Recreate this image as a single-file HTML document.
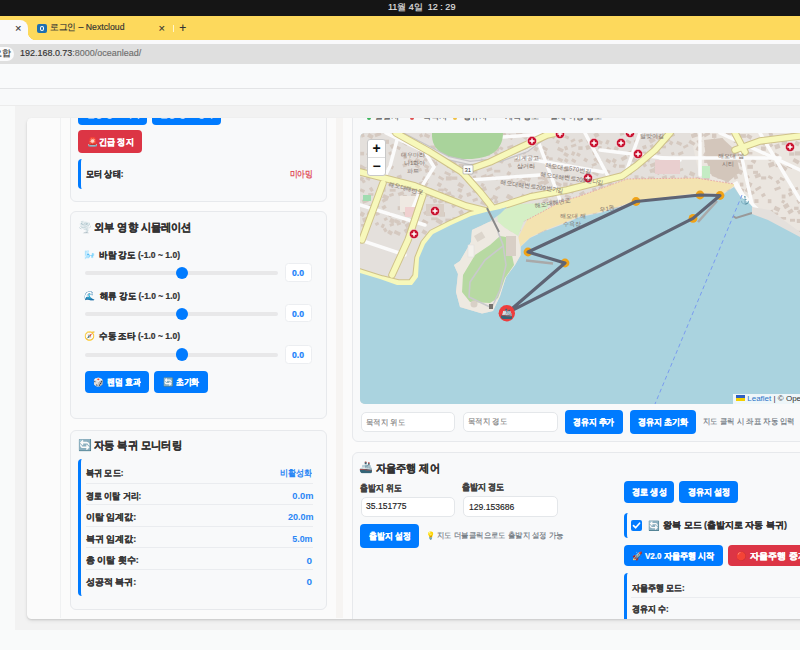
<!DOCTYPE html>
<html><head><meta charset="utf-8">
<style>
*{box-sizing:border-box;margin:0;padding:0}
html,body{width:800px;height:650px;overflow:hidden;background:#f9fafa;font-family:"Liberation Sans",sans-serif;color:#333;position:relative}
.a{position:absolute}
.t{position:absolute;white-space:nowrap;line-height:1}
.b{-webkit-text-stroke:0.22px currentColor}
.n{-webkit-text-stroke:0.15px currentColor}
</style></head><body>
<div class="a" style="left:0px;top:0px;width:800.00px;height:15.50px;background:#151515"></div>
<div class="t n" style="left:388.00px;top:2.50px;font-size:9px;font-weight:normal;color:#e4e4e4;transform:scaleX(1.0002);transform-origin:0 50%;-webkit-text-stroke:0.15px #e4e4e4">11월 4일&nbsp; 12 : 29</div>
<div class="a" style="left:0px;top:15.5px;width:800.00px;height:24.50px;background:#fdd95c"></div>
<div class="a" style="left:0px;top:20px;width:28.00px;height:20.00px;background:#f9f9fb;border-radius:0 8px 0 0"></div>
<div class="a" style="left:28px;top:32px;width:8.00px;height:8.00px;background:radial-gradient(circle at 100% 0, transparent 8px, #f9f9fb 8.5px)"></div>
<div class="t n" style="left:14.90px;top:22.50px;font-size:11px;font-weight:normal;color:#333;">×</div>
<div class="a" style="left:37px;top:23.75px;width:9.50px;height:9.25px;background:#1d6fb0;border-radius:2px"></div>
<div class="a" style="left:39.5px;top:26.2px;width:4.50px;height:4.40px;border:1.3px solid #fff;border-radius:50%"></div>
<div class="t n" style="left:49.85px;top:23.00px;font-size:9px;font-weight:normal;color:#333;transform:scaleX(0.9672);transform-origin:0 50%;">로그인 – Nextcloud</div>
<div class="t n" style="left:158.40px;top:22.50px;font-size:11px;font-weight:normal;color:#333;">×</div>
<div class="a" style="left:173px;top:24.5px;width:1.00px;height:7.50px;background:#fff6cc"></div>
<div class="t n" style="left:179.30px;top:22.00px;font-size:12px;font-weight:normal;color:#333;">+</div>
<div class="a" style="left:0px;top:40px;width:800.00px;height:24.00px;background:#f9f9fb"></div>
<div class="a" style="left:0px;top:43.75px;width:800.00px;height:20.00px;background:#dfdfdf"></div>
<div class="a" style="left:-12px;top:46.6px;width:26.00px;height:14.20px;background:#fbfbfc;border-radius:7px"></div>
<div class="t n" style="left:-7.35px;top:49.45px;font-size:8.5px;font-weight:normal;color:#333;">요합</div>
<div class="t n" style="left:19.60px;top:49.30px;font-size:9.0px;font-weight:normal;color:#333;transform:scaleX(0.9959);transform-origin:0 50%;">192.168.0.73<span style="color:#6f6f6f">:8000/oceanlead/</span></div>
<div class="a" style="left:0px;top:64px;width:800.00px;height:24.00px;background:#f9fafb"></div>
<div class="a" style="left:0px;top:88px;width:800.00px;height:1.00px;background:#e3e4e6"></div>
<div class="a" style="left:0px;top:89px;width:800.00px;height:16.00px;background:#f8f9fa"></div>
<div class="a" style="left:0px;top:105px;width:800.00px;height:1.00px;background:#ececec"></div>
<div class="a" style="left:15px;top:106px;width:785.00px;height:524.00px;background:#f2f2f2"></div>
<div class="a" style="left:26.5px;top:118px;width:803.50px;height:500.50px;background:#fbfbfb;border-radius:4.5px;box-shadow:0 1px 2px rgba(0,0,0,.12), 0 2px 4px rgba(0,0,0,.07)"></div>
<div class="a" style="left:60px;top:118px;width:1.00px;height:500.00px;background:#f0f1f2"></div>
<div class="a" style="left:336px;top:118px;width:7.00px;height:500.00px;background:#f6f4f2"></div>
<div class="a" style="left:61px;top:118px;width:275px;height:500.5px;overflow:hidden"><div class="a" style="left:-61px;top:-118px;width:800px;height:650px">
<div class="a" style="left:70px;top:40px;width:256.50px;height:161.70px;background:#f8f9fa;border:1px solid #e7e9ec;border-radius:6px"></div>
<div class="a" style="left:78px;top:100px;width:69.00px;height:24.60px;background:#007bff;border-radius:4px"></div>
<div class="a" style="left:152.1px;top:100px;width:69.20px;height:24.60px;background:#007bff;border-radius:4px"></div>
<div class="t b" style="left:87.17px;top:110.15px;font-size:8.3px;font-weight:bold;color:#fff;">운항 경로 시작</div>
<div class="t b" style="left:160.17px;top:110.15px;font-size:8.3px;font-weight:bold;color:#fff;">운항 경로 정지</div>
<div class="a" style="left:78px;top:130.4px;width:64.00px;height:22.20px;background:#dc3545;border-radius:4px"></div>
<div class="t" style="left:86.73px;top:137.50px;font-size:9px">🚨</div>
<div class="t b" style="left:99.10px;top:138.00px;font-size:9px;font-weight:bold;color:#fff;transform:scaleX(0.8990);transform-origin:0 50%;">긴급 정지</div>
<div class="a" style="left:78px;top:159px;width:240.00px;height:29.50px;border-left:3px solid #007bff;border-radius:4px 0 0 4px"></div>
<div class="t b" style="left:86.10px;top:169.50px;font-size:9px;font-weight:bold;color:#333;transform:scaleX(0.9024);transform-origin:0 50%;">모터 상태:</div>
<div class="t b" style="right:487.50px;top:169.50px;font-size:9px;font-weight:bold;color:#e0505c;transform:scaleX(0.8661);transform-origin:100% 50%;-webkit-text-stroke:0">미아밍</div>
<div class="a" style="left:70px;top:211.3px;width:256.50px;height:207.70px;background:#f8f9fa;border:1px solid #e7e9ec;border-radius:6px"></div>
<div class="t" style="left:77.66px;top:222.40px;font-size:11.2px">🌪️</div>
<div class="t b" style="left:94.30px;top:221.75px;font-size:11px;font-weight:bold;color:#333;transform:scaleX(0.9296);transform-origin:0 50%;">외부 영향 시뮬레이션</div>
<div class="t" style="left:84.33px;top:250.50px;font-size:9px">🌬️</div>
<div class="t b" style="left:98.50px;top:250.50px;font-size:9px;font-weight:bold;color:#333;transform:scaleX(0.9507);transform-origin:0 50%;">바람 강도 (-1.0 ~ 1.0)</div>
<div class="a" style="left:84.5px;top:270.59999999999997px;width:193.50px;height:4.20px;background:#e8e8e9;border-radius:3px"></div>
<div class="a" style="left:175.6px;top:266.5px;width:12.40px;height:12.40px;background:#007bff;border-radius:50%"></div>
<div class="a" style="left:284.5px;top:263.25px;width:27.25px;height:18.50px;background:#fff;border:1px solid #eceef1;border-radius:3.5px"></div>
<div class="t b" style="left:292.10px;top:268.80px;font-size:9px;font-weight:bold;color:#1a7ffb;transform:scaleX(0.9575);transform-origin:0 50%;">0.0</div>
<div class="t" style="left:84.33px;top:292.20px;font-size:9px">🌊</div>
<div class="t b" style="left:99.50px;top:292.40px;font-size:9px;font-weight:bold;color:#333;transform:scaleX(0.9396);transform-origin:0 50%;">해류 강도 (-1.0 ~ 1.0)</div>
<div class="a" style="left:84.5px;top:311.59999999999997px;width:193.50px;height:4.20px;background:#e8e8e9;border-radius:3px"></div>
<div class="a" style="left:175.6px;top:307.5px;width:12.40px;height:12.40px;background:#007bff;border-radius:50%"></div>
<div class="a" style="left:284.5px;top:304.1px;width:27.25px;height:18.40px;background:#fff;border:1px solid #eceef1;border-radius:3.5px"></div>
<div class="t b" style="left:292.10px;top:310.40px;font-size:9px;font-weight:bold;color:#1a7ffb;transform:scaleX(0.9575);transform-origin:0 50%;">0.0</div>
<div class="t" style="left:84.33px;top:332.00px;font-size:9px">🧭</div>
<div class="t b" style="left:98.50px;top:332.00px;font-size:9px;font-weight:bold;color:#333;transform:scaleX(0.9507);transform-origin:0 50%;">수동 조타 (-1.0 ~ 1.0)</div>
<div class="a" style="left:84.5px;top:352.5px;width:193.50px;height:4.20px;background:#e8e8e9;border-radius:3px"></div>
<div class="a" style="left:175.6px;top:348.40000000000003px;width:12.40px;height:12.40px;background:#007bff;border-radius:50%"></div>
<div class="a" style="left:284.5px;top:345.0px;width:27.25px;height:19.00px;background:#fff;border:1px solid #eceef1;border-radius:3.5px"></div>
<div class="t b" style="left:292.10px;top:350.80px;font-size:9px;font-weight:bold;color:#1a7ffb;transform:scaleX(0.9575);transform-origin:0 50%;">0.0</div>
<div class="a" style="left:85.2px;top:370.75px;width:64.05px;height:22.05px;background:#007bff;border-radius:4px"></div>
<div class="t" style="left:93.36px;top:377.75px;font-size:8.5px">🎲</div>
<div class="t b" style="left:106.85px;top:377.60px;font-size:9px;font-weight:bold;color:#fff;transform:scaleX(0.8688);transform-origin:0 50%;">랜덤 효과</div>
<div class="a" style="left:153.8px;top:370.75px;width:54.20px;height:22.05px;background:#007bff;border-radius:4px"></div>
<div class="t" style="left:163.36px;top:377.75px;font-size:8.5px">🔄</div>
<div class="t b" style="left:175.60px;top:377.60px;font-size:9px;font-weight:bold;color:#fff;transform:scaleX(0.8582);transform-origin:0 50%;">초기화</div>
<div class="a" style="left:70px;top:429.5px;width:256.50px;height:180.30px;background:#f8f9fa;border:1px solid #e7e9ec;border-radius:6px"></div>
<div class="t" style="left:77.66px;top:440.40px;font-size:11.2px">🔄</div>
<div class="t b" style="left:94.30px;top:440.30px;font-size:11px;font-weight:bold;color:#333;transform:scaleX(0.9356);transform-origin:0 50%;">자동 복귀 모니터링</div>
<div class="a" style="left:78px;top:458.5px;width:240.00px;height:137.50px;border-left:3px solid #007bff;border-radius:4px 0 0 4px"></div>
<div class="a" style="left:86px;top:482.5px;width:226.60px;height:1.00px;background:#eaecef"></div>
<div class="a" style="left:86px;top:504px;width:226.60px;height:1.00px;background:#eaecef"></div>
<div class="a" style="left:86px;top:526px;width:226.60px;height:1.00px;background:#eaecef"></div>
<div class="a" style="left:86px;top:547.2px;width:226.60px;height:1.00px;background:#eaecef"></div>
<div class="a" style="left:86px;top:568.8px;width:226.60px;height:1.00px;background:#eaecef"></div>
<div class="t b" style="left:85.70px;top:469.40px;font-size:9px;font-weight:bold;color:#3a3a3a;transform:scaleX(0.9024);transform-origin:0 50%;">복귀 모드:</div>
<div class="t b" style="right:487.80px;top:469.40px;font-size:9px;font-weight:bold;color:#2a86f5;transform:scaleX(0.8928);transform-origin:100% 50%;-webkit-text-stroke:0">비활성화</div>
<div class="t b" style="left:85.70px;top:491.80px;font-size:9px;font-weight:bold;color:#3a3a3a;transform:scaleX(0.8904);transform-origin:0 50%;">경로 이탈 거리:</div>
<div class="t b" style="right:486.80px;top:491.80px;font-size:9px;font-weight:bold;color:#2a86f5;transform:scaleX(1.0315);transform-origin:100% 50%;-webkit-text-stroke:0">0.0m</div>
<div class="t b" style="left:85.70px;top:513.00px;font-size:9px;font-weight:bold;color:#3a3a3a;">이탈 임계값:</div>
<div class="t b" style="right:486.80px;top:513.00px;font-size:9px;font-weight:bold;color:#2a86f5;transform:scaleX(1.0048);transform-origin:100% 50%;-webkit-text-stroke:0">20.0m</div>
<div class="t b" style="left:85.70px;top:534.50px;font-size:9px;font-weight:bold;color:#3a3a3a;">복귀 임계값:</div>
<div class="t b" style="right:487.80px;top:534.50px;font-size:9px;font-weight:bold;color:#2a86f5;transform:scaleX(0.9871);transform-origin:100% 50%;-webkit-text-stroke:0">5.0m</div>
<div class="t b" style="left:85.70px;top:555.70px;font-size:9px;font-weight:bold;color:#3a3a3a;">총 이탈 횟수:</div>
<div class="t b" style="right:487.80px;top:556.70px;font-size:9px;font-weight:bold;color:#2a86f5;transform:scaleX(1.1073);transform-origin:100% 50%;-webkit-text-stroke:0">0</div>
<div class="t b" style="left:85.70px;top:577.90px;font-size:9px;font-weight:bold;color:#3a3a3a;">성공적 복귀:</div>
<div class="t b" style="right:487.80px;top:577.90px;font-size:9px;font-weight:bold;color:#2a86f5;transform:scaleX(1.1073);transform-origin:100% 50%;-webkit-text-stroke:0">0</div>
</div></div>
<div class="a" style="left:343px;top:118px;width:457px;height:500.5px;overflow:hidden"><div class="a" style="left:-343px;top:-118px;width:800px;height:650px">
<div class="a" style="left:352px;top:60px;width:478.00px;height:382.00px;background:#f8f9fa;border:1px solid #e7e9ec;border-radius:6px"></div>
<div class="a" style="left:367px;top:115.5px;width:4.00px;height:4.00px;background:#3bb55b;border-radius:50%"></div>
<div class="a" style="left:410px;top:115.5px;width:4.00px;height:4.00px;background:#e05050;border-radius:50%"></div>
<div class="a" style="left:453.4px;top:115.5px;width:4.00px;height:4.00px;background:#f0c040;border-radius:50%"></div>
<div class="t n" style="left:374.77px;top:111.85px;font-size:8.3px;font-weight:normal;color:#555;">출발지</div>
<div class="t n" style="left:422.67px;top:111.85px;font-size:8.3px;font-weight:normal;color:#555;">목적지</div>
<div class="t n" style="left:462.97px;top:111.85px;font-size:8.3px;font-weight:normal;color:#555;">경유지</div>
<div class="t n" style="left:504.77px;top:111.85px;font-size:8.3px;font-weight:normal;color:#555;">계획 경로</div>
<div class="t n" style="left:549.77px;top:111.85px;font-size:8.3px;font-weight:normal;color:#555;">실제 이동 경로</div>
<div id="map" class="a" style="left:360px;top:133px;width:460px;height:271px;border-radius:5px;overflow:hidden;background:#aad3df">
<svg width="460" height="271" viewBox="360 133 460 271" style="position:absolute;left:0;top:0">
<rect x="360" y="133" width="460" height="271" fill="#e4e0dc"/>
<polygon points="690,133 820,133 820,240 760,215 740,190 700,178" fill="#ebe6e0"/>
<rect x="360.5" y="134.3" width="3.3" height="3.6" fill="#d5c9c0" transform="rotate(-20 360.5 134.3)"/>
<rect x="360.3" y="151.8" width="3.8" height="3.6" fill="#d5c9c0" transform="rotate(0 360.3 151.8)"/>
<rect x="360.7" y="164.3" width="6.3" height="3.7" fill="#d5c9c0" transform="rotate(30 360.7 164.3)"/>
<rect x="360.7" y="170.1" width="3.5" height="3.3" fill="#d5c9c0" transform="rotate(-30 360.7 170.1)"/>
<rect x="360.9" y="176.6" width="3.6" height="3.7" fill="#d5c9c0" transform="rotate(25 360.9 176.6)"/>
<rect x="361.6" y="181.1" width="3.2" height="2.9" fill="#d5c9c0" transform="rotate(-30 361.6 181.1)"/>
<rect x="360.9" y="188.2" width="4.6" height="3.1" fill="#d5c9c0" transform="rotate(25 360.9 188.2)"/>
<rect x="361.7" y="200.1" width="6.1" height="4.0" fill="#d5c9c0" transform="rotate(-20 361.7 200.1)"/>
<rect x="361.5" y="211.3" width="4.2" height="4.4" fill="#d5c9c0" transform="rotate(30 361.5 211.3)"/>
<rect x="362.0" y="218.5" width="5.0" height="4.3" fill="#d5c9c0" transform="rotate(-20 362.0 218.5)"/>
<rect x="361.1" y="224.0" width="5.8" height="2.6" fill="#d5c9c0" transform="rotate(0 361.1 224.0)"/>
<rect x="369.0" y="133.1" width="5.5" height="3.8" fill="#d5c9c0" transform="rotate(30 369.0 133.1)"/>
<rect x="368.2" y="140.3" width="3.1" height="3.4" fill="#d5c9c0" transform="rotate(25 368.2 140.3)"/>
<rect x="367.7" y="151.6" width="5.6" height="3.3" fill="#d5c9c0" transform="rotate(30 367.7 151.6)"/>
<rect x="368.3" y="158.1" width="6.1" height="4.1" fill="#d5c9c0" transform="rotate(-30 368.3 158.1)"/>
<rect x="368.2" y="163.7" width="6.1" height="4.4" fill="#d5c9c0" transform="rotate(25 368.2 163.7)"/>
<rect x="367.5" y="170.3" width="3.0" height="4.2" fill="#d5c9c0" transform="rotate(25 367.5 170.3)"/>
<rect x="367.0" y="175.8" width="4.3" height="3.6" fill="#d5c9c0" transform="rotate(25 367.0 175.8)"/>
<rect x="368.9" y="188.4" width="3.2" height="4.3" fill="#d5c9c0" transform="rotate(-30 368.9 188.4)"/>
<rect x="368.2" y="193.2" width="5.2" height="2.6" fill="#d5c9c0" transform="rotate(0 368.2 193.2)"/>
<rect x="367.3" y="206.2" width="3.4" height="3.6" fill="#d5c9c0" transform="rotate(-30 367.3 206.2)"/>
<rect x="368.1" y="211.1" width="6.1" height="3.7" fill="#d5c9c0" transform="rotate(25 368.1 211.1)"/>
<rect x="374.3" y="134.0" width="6.4" height="3.5" fill="#d5c9c0" transform="rotate(-20 374.3 134.0)"/>
<rect x="374.3" y="139.7" width="3.9" height="4.2" fill="#d5c9c0" transform="rotate(25 374.3 139.7)"/>
<rect x="374.6" y="146.9" width="4.3" height="3.9" fill="#d5c9c0" transform="rotate(0 374.6 146.9)"/>
<rect x="375.9" y="157.2" width="6.0" height="3.5" fill="#d5c9c0" transform="rotate(25 375.9 157.2)"/>
<rect x="374.7" y="164.1" width="4.8" height="3.8" fill="#d5c9c0" transform="rotate(-30 374.7 164.1)"/>
<rect x="375.6" y="205.7" width="3.1" height="2.6" fill="#d5c9c0" transform="rotate(-20 375.6 205.7)"/>
<rect x="374.6" y="212.2" width="4.2" height="4.1" fill="#d5c9c0" transform="rotate(-20 374.6 212.2)"/>
<rect x="374.7" y="223.5" width="3.7" height="2.9" fill="#d5c9c0" transform="rotate(-30 374.7 223.5)"/>
<rect x="383.7" y="139.7" width="5.3" height="4.2" fill="#d5c9c0" transform="rotate(0 383.7 139.7)"/>
<rect x="381.5" y="164.6" width="4.2" height="4.1" fill="#d5c9c0" transform="rotate(30 381.5 164.6)"/>
<rect x="383.2" y="169.2" width="3.6" height="4.5" fill="#d5c9c0" transform="rotate(0 383.2 169.2)"/>
<rect x="383.7" y="176.6" width="3.5" height="4.2" fill="#d5c9c0" transform="rotate(30 383.7 176.6)"/>
<rect x="382.6" y="187.3" width="3.0" height="4.4" fill="#d5c9c0" transform="rotate(0 382.6 187.3)"/>
<rect x="383.8" y="193.9" width="6.1" height="4.2" fill="#d5c9c0" transform="rotate(25 383.8 193.9)"/>
<rect x="381.6" y="200.0" width="5.7" height="3.2" fill="#d5c9c0" transform="rotate(-30 381.6 200.0)"/>
<rect x="381.4" y="206.8" width="4.2" height="3.4" fill="#d5c9c0" transform="rotate(-30 381.4 206.8)"/>
<rect x="383.5" y="218.8" width="3.5" height="2.8" fill="#d5c9c0" transform="rotate(-30 383.5 218.8)"/>
<rect x="382.3" y="223.4" width="3.0" height="4.1" fill="#d5c9c0" transform="rotate(25 382.3 223.4)"/>
<rect x="382.9" y="229.2" width="3.2" height="3.9" fill="#d5c9c0" transform="rotate(-30 382.9 229.2)"/>
<rect x="389.7" y="145.5" width="4.0" height="4.0" fill="#d5c9c0" transform="rotate(-30 389.7 145.5)"/>
<rect x="388.1" y="152.8" width="3.2" height="3.2" fill="#d5c9c0" transform="rotate(-30 388.1 152.8)"/>
<rect x="388.8" y="164.0" width="5.8" height="3.5" fill="#d5c9c0" transform="rotate(25 388.8 164.0)"/>
<rect x="389.7" y="188.9" width="5.9" height="2.8" fill="#d5c9c0" transform="rotate(0 389.7 188.9)"/>
<rect x="388.9" y="194.3" width="4.5" height="2.9" fill="#d5c9c0" transform="rotate(-20 388.9 194.3)"/>
<rect x="390.1" y="212.3" width="3.5" height="4.3" fill="#d5c9c0" transform="rotate(30 390.1 212.3)"/>
<rect x="390.9" y="217.8" width="4.7" height="4.5" fill="#d5c9c0" transform="rotate(25 390.9 217.8)"/>
<rect x="389.3" y="224.0" width="4.2" height="2.9" fill="#d5c9c0" transform="rotate(-20 389.3 224.0)"/>
<rect x="389.1" y="229.7" width="4.6" height="3.9" fill="#d5c9c0" transform="rotate(30 389.1 229.7)"/>
<rect x="396.9" y="134.0" width="3.2" height="4.5" fill="#d5c9c0" transform="rotate(25 396.9 134.0)"/>
<rect x="395.8" y="145.1" width="5.7" height="3.0" fill="#d5c9c0" transform="rotate(25 395.8 145.1)"/>
<rect x="396.6" y="176.0" width="4.7" height="3.2" fill="#d5c9c0" transform="rotate(-20 396.6 176.0)"/>
<rect x="397.1" y="181.9" width="3.3" height="4.4" fill="#d5c9c0" transform="rotate(0 397.1 181.9)"/>
<rect x="397.6" y="193.1" width="6.0" height="3.4" fill="#d5c9c0" transform="rotate(-20 397.6 193.1)"/>
<rect x="397.7" y="206.2" width="3.2" height="3.9" fill="#d5c9c0" transform="rotate(0 397.7 206.2)"/>
<rect x="395.5" y="218.9" width="5.2" height="3.6" fill="#d5c9c0" transform="rotate(25 395.5 218.9)"/>
<rect x="396.5" y="223.4" width="4.2" height="2.5" fill="#d5c9c0" transform="rotate(-20 396.5 223.4)"/>
<rect x="395.1" y="230.0" width="6.4" height="3.5" fill="#d5c9c0" transform="rotate(25 395.1 230.0)"/>
<rect x="404.5" y="139.9" width="4.7" height="4.2" fill="#d5c9c0" transform="rotate(30 404.5 139.9)"/>
<rect x="402.6" y="151.5" width="3.7" height="4.3" fill="#d5c9c0" transform="rotate(25 402.6 151.5)"/>
<rect x="403.0" y="157.1" width="3.5" height="2.6" fill="#d5c9c0" transform="rotate(-20 403.0 157.1)"/>
<rect x="402.2" y="164.3" width="4.3" height="3.5" fill="#d5c9c0" transform="rotate(-20 402.2 164.3)"/>
<rect x="402.6" y="181.5" width="3.0" height="3.2" fill="#d5c9c0" transform="rotate(-20 402.6 181.5)"/>
<rect x="402.7" y="194.9" width="4.1" height="3.2" fill="#d5c9c0" transform="rotate(0 402.7 194.9)"/>
<rect x="402.3" y="199.6" width="5.3" height="3.0" fill="#d5c9c0" transform="rotate(0 402.3 199.6)"/>
<rect x="404.5" y="205.3" width="5.1" height="3.3" fill="#d5c9c0" transform="rotate(-20 404.5 205.3)"/>
<rect x="402.7" y="212.2" width="4.9" height="4.0" fill="#d5c9c0" transform="rotate(-30 402.7 212.2)"/>
<rect x="403.0" y="219.0" width="3.5" height="3.9" fill="#d5c9c0" transform="rotate(25 403.0 219.0)"/>
<rect x="404.5" y="224.8" width="5.2" height="4.0" fill="#d5c9c0" transform="rotate(-30 404.5 224.8)"/>
<rect x="403.6" y="230.0" width="5.9" height="4.1" fill="#d5c9c0" transform="rotate(-30 403.6 230.0)"/>
<rect x="409.1" y="158.3" width="6.4" height="3.3" fill="#d5c9c0" transform="rotate(30 409.1 158.3)"/>
<rect x="409.0" y="188.6" width="5.6" height="3.5" fill="#d5c9c0" transform="rotate(-30 409.0 188.6)"/>
<rect x="410.6" y="194.5" width="4.7" height="4.1" fill="#d5c9c0" transform="rotate(-20 410.6 194.5)"/>
<rect x="411.3" y="199.5" width="5.3" height="3.4" fill="#d5c9c0" transform="rotate(30 411.3 199.5)"/>
<rect x="411.7" y="205.6" width="3.2" height="3.8" fill="#d5c9c0" transform="rotate(25 411.7 205.6)"/>
<rect x="409.4" y="211.5" width="5.6" height="3.1" fill="#d5c9c0" transform="rotate(-30 409.4 211.5)"/>
<rect x="410.4" y="218.0" width="6.4" height="2.7" fill="#d5c9c0" transform="rotate(25 410.4 218.0)"/>
<rect x="410.5" y="229.9" width="4.6" height="2.7" fill="#d5c9c0" transform="rotate(-30 410.5 229.9)"/>
<rect x="418.9" y="134.9" width="3.1" height="3.4" fill="#d5c9c0" transform="rotate(-30 418.9 134.9)"/>
<rect x="416.8" y="145.4" width="6.3" height="2.9" fill="#d5c9c0" transform="rotate(-30 416.8 145.4)"/>
<rect x="418.2" y="151.5" width="4.3" height="3.7" fill="#d5c9c0" transform="rotate(-30 418.2 151.5)"/>
<rect x="416.3" y="157.7" width="4.7" height="4.3" fill="#d5c9c0" transform="rotate(30 416.3 157.7)"/>
<rect x="416.0" y="164.0" width="4.6" height="3.1" fill="#d5c9c0" transform="rotate(25 416.0 164.0)"/>
<rect x="417.1" y="169.2" width="4.2" height="3.1" fill="#d5c9c0" transform="rotate(-20 417.1 169.2)"/>
<rect x="418.8" y="182.4" width="6.2" height="3.1" fill="#d5c9c0" transform="rotate(-20 418.8 182.4)"/>
<rect x="417.2" y="188.7" width="3.3" height="4.4" fill="#d5c9c0" transform="rotate(-20 417.2 188.7)"/>
<rect x="416.2" y="200.3" width="5.2" height="2.8" fill="#d5c9c0" transform="rotate(-20 416.2 200.3)"/>
<rect x="416.9" y="206.5" width="5.7" height="3.4" fill="#d5c9c0" transform="rotate(0 416.9 206.5)"/>
<rect x="425.2" y="133.1" width="5.6" height="3.4" fill="#d5c9c0" transform="rotate(25 425.2 133.1)"/>
<rect x="423.1" y="146.9" width="3.4" height="3.4" fill="#d5c9c0" transform="rotate(-20 423.1 146.9)"/>
<rect x="423.8" y="152.5" width="5.3" height="3.3" fill="#d5c9c0" transform="rotate(25 423.8 152.5)"/>
<rect x="424.7" y="157.8" width="3.6" height="2.8" fill="#d5c9c0" transform="rotate(25 424.7 157.8)"/>
<rect x="425.4" y="164.1" width="4.6" height="3.2" fill="#d5c9c0" transform="rotate(30 425.4 164.1)"/>
<rect x="424.6" y="169.5" width="3.6" height="3.6" fill="#d5c9c0" transform="rotate(-20 424.6 169.5)"/>
<rect x="423.8" y="176.1" width="6.1" height="4.0" fill="#d5c9c0" transform="rotate(30 423.8 176.1)"/>
<rect x="425.2" y="181.4" width="3.9" height="4.0" fill="#d5c9c0" transform="rotate(30 425.2 181.4)"/>
<rect x="425.9" y="187.3" width="4.8" height="3.8" fill="#d5c9c0" transform="rotate(25 425.9 187.3)"/>
<rect x="425.7" y="193.8" width="5.3" height="3.4" fill="#d5c9c0" transform="rotate(-20 425.7 193.8)"/>
<rect x="423.1" y="212.4" width="6.1" height="3.4" fill="#d5c9c0" transform="rotate(-30 423.1 212.4)"/>
<rect x="423.2" y="218.9" width="6.2" height="3.6" fill="#d5c9c0" transform="rotate(30 423.2 218.9)"/>
<rect x="423.3" y="229.3" width="4.8" height="3.9" fill="#d5c9c0" transform="rotate(30 423.3 229.3)"/>
<rect x="432.3" y="133.0" width="3.4" height="3.6" fill="#d5c9c0" transform="rotate(0 432.3 133.0)"/>
<rect x="430.4" y="145.5" width="5.2" height="3.9" fill="#d5c9c0" transform="rotate(0 430.4 145.5)"/>
<rect x="430.9" y="152.9" width="3.7" height="3.0" fill="#d5c9c0" transform="rotate(-30 430.9 152.9)"/>
<rect x="431.6" y="159.0" width="4.0" height="3.1" fill="#d5c9c0" transform="rotate(25 431.6 159.0)"/>
<rect x="430.7" y="163.5" width="6.4" height="3.9" fill="#d5c9c0" transform="rotate(-20 430.7 163.5)"/>
<rect x="430.6" y="170.8" width="5.3" height="2.7" fill="#d5c9c0" transform="rotate(25 430.6 170.8)"/>
<rect x="430.1" y="187.7" width="4.5" height="3.9" fill="#d5c9c0" transform="rotate(25 430.1 187.7)"/>
<rect x="430.9" y="194.7" width="3.2" height="3.5" fill="#d5c9c0" transform="rotate(25 430.9 194.7)"/>
<rect x="432.5" y="199.5" width="3.8" height="4.0" fill="#d5c9c0" transform="rotate(-20 432.5 199.5)"/>
<rect x="431.9" y="206.2" width="6.1" height="3.5" fill="#d5c9c0" transform="rotate(0 431.9 206.2)"/>
<rect x="431.2" y="217.4" width="6.4" height="2.8" fill="#d5c9c0" transform="rotate(0 431.2 217.4)"/>
<rect x="431.3" y="230.4" width="4.1" height="2.7" fill="#d5c9c0" transform="rotate(0 431.3 230.4)"/>
<rect x="437.6" y="140.9" width="5.6" height="2.6" fill="#d5c9c0" transform="rotate(30 437.6 140.9)"/>
<rect x="437.3" y="157.2" width="3.3" height="3.3" fill="#d5c9c0" transform="rotate(0 437.3 157.2)"/>
<rect x="439.3" y="175.6" width="5.8" height="2.7" fill="#d5c9c0" transform="rotate(30 439.3 175.6)"/>
<rect x="438.6" y="181.9" width="4.1" height="4.0" fill="#d5c9c0" transform="rotate(30 438.6 181.9)"/>
<rect x="438.2" y="188.6" width="5.7" height="2.6" fill="#d5c9c0" transform="rotate(0 438.2 188.6)"/>
<rect x="439.4" y="193.1" width="3.7" height="2.6" fill="#d5c9c0" transform="rotate(-30 439.4 193.1)"/>
<rect x="437.8" y="200.9" width="5.2" height="3.0" fill="#d5c9c0" transform="rotate(-20 437.8 200.9)"/>
<rect x="439.2" y="212.2" width="5.8" height="4.4" fill="#d5c9c0" transform="rotate(0 439.2 212.2)"/>
<rect x="437.7" y="218.0" width="6.3" height="4.4" fill="#d5c9c0" transform="rotate(30 437.7 218.0)"/>
<rect x="445.5" y="139.0" width="6.3" height="3.1" fill="#d5c9c0" transform="rotate(25 445.5 139.0)"/>
<rect x="445.0" y="151.7" width="5.7" height="2.7" fill="#d5c9c0" transform="rotate(25 445.0 151.7)"/>
<rect x="444.5" y="157.8" width="5.3" height="3.5" fill="#d5c9c0" transform="rotate(-30 444.5 157.8)"/>
<rect x="446.9" y="164.8" width="6.5" height="3.0" fill="#d5c9c0" transform="rotate(0 446.9 164.8)"/>
<rect x="445.3" y="171.0" width="6.4" height="2.8" fill="#d5c9c0" transform="rotate(25 445.3 171.0)"/>
<rect x="445.9" y="176.3" width="5.6" height="4.2" fill="#d5c9c0" transform="rotate(0 445.9 176.3)"/>
<rect x="444.8" y="187.5" width="3.9" height="3.0" fill="#d5c9c0" transform="rotate(30 444.8 187.5)"/>
<rect x="444.7" y="193.3" width="6.1" height="3.7" fill="#d5c9c0" transform="rotate(-20 444.7 193.3)"/>
<rect x="444.8" y="199.5" width="4.8" height="3.8" fill="#d5c9c0" transform="rotate(0 444.8 199.5)"/>
<rect x="445.4" y="218.6" width="5.9" height="4.3" fill="#d5c9c0" transform="rotate(0 445.4 218.6)"/>
<rect x="444.2" y="230.2" width="5.9" height="2.9" fill="#d5c9c0" transform="rotate(0 444.2 230.2)"/>
<rect x="453.6" y="133.9" width="3.9" height="4.1" fill="#d5c9c0" transform="rotate(0 453.6 133.9)"/>
<rect x="452.8" y="140.2" width="3.8" height="3.2" fill="#d5c9c0" transform="rotate(25 452.8 140.2)"/>
<rect x="454.0" y="145.1" width="5.6" height="4.3" fill="#d5c9c0" transform="rotate(0 454.0 145.1)"/>
<rect x="452.1" y="158.2" width="3.3" height="2.6" fill="#d5c9c0" transform="rotate(30 452.1 158.2)"/>
<rect x="451.2" y="163.2" width="4.4" height="3.6" fill="#d5c9c0" transform="rotate(-30 451.2 163.2)"/>
<rect x="451.5" y="170.4" width="4.4" height="3.1" fill="#d5c9c0" transform="rotate(-20 451.5 170.4)"/>
<rect x="451.2" y="176.5" width="6.1" height="3.3" fill="#d5c9c0" transform="rotate(0 451.2 176.5)"/>
<rect x="451.6" y="194.5" width="3.7" height="2.5" fill="#d5c9c0" transform="rotate(25 451.6 194.5)"/>
<rect x="453.5" y="199.8" width="6.1" height="3.4" fill="#d5c9c0" transform="rotate(25 453.5 199.8)"/>
<rect x="451.2" y="205.3" width="5.8" height="3.3" fill="#d5c9c0" transform="rotate(-30 451.2 205.3)"/>
<rect x="452.5" y="217.3" width="4.0" height="3.5" fill="#d5c9c0" transform="rotate(0 452.5 217.3)"/>
<rect x="452.5" y="224.6" width="6.4" height="2.9" fill="#d5c9c0" transform="rotate(25 452.5 224.6)"/>
<rect x="460.7" y="133.6" width="5.1" height="3.8" fill="#d5c9c0" transform="rotate(0 460.7 133.6)"/>
<rect x="460.4" y="157.4" width="4.4" height="4.2" fill="#d5c9c0" transform="rotate(30 460.4 157.4)"/>
<rect x="458.7" y="163.8" width="4.8" height="3.3" fill="#d5c9c0" transform="rotate(0 458.7 163.8)"/>
<rect x="460.9" y="170.6" width="3.7" height="4.3" fill="#d5c9c0" transform="rotate(0 460.9 170.6)"/>
<rect x="459.2" y="181.9" width="6.0" height="4.1" fill="#d5c9c0" transform="rotate(30 459.2 181.9)"/>
<rect x="458.7" y="187.8" width="4.3" height="3.5" fill="#d5c9c0" transform="rotate(25 458.7 187.8)"/>
<rect x="459.9" y="194.0" width="3.8" height="4.0" fill="#d5c9c0" transform="rotate(30 459.9 194.0)"/>
<rect x="458.2" y="211.7" width="4.3" height="4.1" fill="#d5c9c0" transform="rotate(-30 458.2 211.7)"/>
<rect x="458.1" y="218.3" width="3.3" height="4.0" fill="#d5c9c0" transform="rotate(-30 458.1 218.3)"/>
<rect x="460.3" y="224.8" width="5.3" height="4.1" fill="#d5c9c0" transform="rotate(0 460.3 224.8)"/>
<rect x="467.9" y="152.0" width="6.3" height="4.3" fill="#d5c9c0" transform="rotate(25 467.9 152.0)"/>
<rect x="467.5" y="170.2" width="3.9" height="3.1" fill="#d5c9c0" transform="rotate(-30 467.5 170.2)"/>
<rect x="467.4" y="175.3" width="4.8" height="4.3" fill="#d5c9c0" transform="rotate(25 467.4 175.3)"/>
<rect x="466.1" y="193.4" width="4.4" height="3.8" fill="#d5c9c0" transform="rotate(-20 466.1 193.4)"/>
<rect x="467.4" y="211.2" width="4.9" height="3.8" fill="#d5c9c0" transform="rotate(-20 467.4 211.2)"/>
<rect x="466.6" y="224.4" width="6.1" height="3.0" fill="#d5c9c0" transform="rotate(-30 466.6 224.4)"/>
<rect x="474.4" y="133.5" width="6.5" height="3.7" fill="#d5c9c0" transform="rotate(-20 474.4 133.5)"/>
<rect x="472.2" y="139.5" width="5.2" height="4.4" fill="#d5c9c0" transform="rotate(-20 472.2 139.5)"/>
<rect x="473.9" y="153.0" width="5.1" height="3.8" fill="#d5c9c0" transform="rotate(-20 473.9 153.0)"/>
<rect x="472.9" y="170.3" width="4.5" height="3.2" fill="#d5c9c0" transform="rotate(0 472.9 170.3)"/>
<rect x="472.7" y="176.3" width="3.1" height="2.5" fill="#d5c9c0" transform="rotate(-20 472.7 176.3)"/>
<rect x="473.6" y="182.1" width="4.4" height="3.1" fill="#d5c9c0" transform="rotate(25 473.6 182.1)"/>
<rect x="473.9" y="187.9" width="3.5" height="4.4" fill="#d5c9c0" transform="rotate(25 473.9 187.9)"/>
<rect x="472.2" y="199.3" width="5.3" height="3.0" fill="#d5c9c0" transform="rotate(-20 472.2 199.3)"/>
<rect x="474.5" y="212.8" width="5.1" height="3.7" fill="#d5c9c0" transform="rotate(-30 474.5 212.8)"/>
<rect x="474.7" y="229.1" width="4.9" height="3.3" fill="#d5c9c0" transform="rotate(25 474.7 229.1)"/>
<rect x="481.7" y="133.2" width="5.1" height="3.8" fill="#d5c9c0" transform="rotate(25 481.7 133.2)"/>
<rect x="479.6" y="140.2" width="4.8" height="3.8" fill="#d5c9c0" transform="rotate(-30 479.6 140.2)"/>
<rect x="479.9" y="145.6" width="3.2" height="4.3" fill="#d5c9c0" transform="rotate(30 479.9 145.6)"/>
<rect x="481.5" y="158.5" width="4.6" height="4.0" fill="#d5c9c0" transform="rotate(30 481.5 158.5)"/>
<rect x="482.0" y="163.5" width="5.3" height="2.7" fill="#d5c9c0" transform="rotate(-20 482.0 163.5)"/>
<rect x="480.7" y="175.9" width="5.8" height="3.5" fill="#d5c9c0" transform="rotate(-20 480.7 175.9)"/>
<rect x="481.8" y="182.8" width="3.3" height="3.5" fill="#d5c9c0" transform="rotate(25 481.8 182.8)"/>
<rect x="479.7" y="188.5" width="6.3" height="4.0" fill="#d5c9c0" transform="rotate(-20 479.7 188.5)"/>
<rect x="480.2" y="194.2" width="4.3" height="4.2" fill="#d5c9c0" transform="rotate(-30 480.2 194.2)"/>
<rect x="481.5" y="200.4" width="6.0" height="3.4" fill="#d5c9c0" transform="rotate(25 481.5 200.4)"/>
<rect x="479.6" y="212.2" width="3.3" height="4.3" fill="#d5c9c0" transform="rotate(25 479.6 212.2)"/>
<rect x="479.3" y="218.2" width="3.6" height="4.5" fill="#d5c9c0" transform="rotate(0 479.3 218.2)"/>
<rect x="479.4" y="224.3" width="3.1" height="2.6" fill="#d5c9c0" transform="rotate(0 479.4 224.3)"/>
<rect x="480.8" y="229.7" width="5.9" height="4.1" fill="#d5c9c0" transform="rotate(0 480.8 229.7)"/>
<rect x="486.7" y="151.4" width="3.1" height="4.4" fill="#d5c9c0" transform="rotate(0 486.7 151.4)"/>
<rect x="486.3" y="169.2" width="5.7" height="2.9" fill="#d5c9c0" transform="rotate(-20 486.3 169.2)"/>
<rect x="486.8" y="175.7" width="6.3" height="2.6" fill="#d5c9c0" transform="rotate(-20 486.8 175.7)"/>
<rect x="486.9" y="200.5" width="5.8" height="2.6" fill="#d5c9c0" transform="rotate(-30 486.9 200.5)"/>
<rect x="488.1" y="212.1" width="3.8" height="4.2" fill="#d5c9c0" transform="rotate(0 488.1 212.1)"/>
<rect x="487.3" y="224.0" width="4.0" height="4.0" fill="#d5c9c0" transform="rotate(0 487.3 224.0)"/>
<rect x="487.5" y="230.0" width="5.8" height="2.9" fill="#d5c9c0" transform="rotate(30 487.5 230.0)"/>
<rect x="494.7" y="145.3" width="5.9" height="4.4" fill="#d5c9c0" transform="rotate(25 494.7 145.3)"/>
<rect x="493.3" y="152.3" width="3.3" height="4.1" fill="#d5c9c0" transform="rotate(-30 493.3 152.3)"/>
<rect x="494.2" y="169.8" width="6.1" height="2.7" fill="#d5c9c0" transform="rotate(0 494.2 169.8)"/>
<rect x="493.9" y="175.9" width="4.9" height="2.8" fill="#d5c9c0" transform="rotate(25 493.9 175.9)"/>
<rect x="494.8" y="188.4" width="5.1" height="2.6" fill="#d5c9c0" transform="rotate(-30 494.8 188.4)"/>
<rect x="493.5" y="194.7" width="5.3" height="4.0" fill="#d5c9c0" transform="rotate(25 493.5 194.7)"/>
<rect x="495.1" y="199.5" width="3.8" height="3.2" fill="#d5c9c0" transform="rotate(25 495.1 199.5)"/>
<rect x="493.8" y="206.5" width="5.9" height="3.7" fill="#d5c9c0" transform="rotate(25 493.8 206.5)"/>
<rect x="493.7" y="230.9" width="3.9" height="4.4" fill="#d5c9c0" transform="rotate(0 493.7 230.9)"/>
<rect x="502.0" y="133.4" width="3.5" height="2.8" fill="#d5c9c0" transform="rotate(-20 502.0 133.4)"/>
<rect x="500.6" y="146.3" width="3.4" height="2.9" fill="#d5c9c0" transform="rotate(30 500.6 146.3)"/>
<rect x="500.0" y="152.7" width="4.5" height="2.9" fill="#d5c9c0" transform="rotate(-20 500.0 152.7)"/>
<rect x="500.4" y="158.2" width="4.4" height="4.0" fill="#d5c9c0" transform="rotate(30 500.4 158.2)"/>
<rect x="500.5" y="217.2" width="4.5" height="3.0" fill="#d5c9c0" transform="rotate(0 500.5 217.2)"/>
<rect x="501.2" y="230.4" width="3.5" height="4.2" fill="#d5c9c0" transform="rotate(30 501.2 230.4)"/>
<rect x="508.9" y="133.8" width="5.4" height="4.4" fill="#d5c9c0" transform="rotate(25 508.9 133.8)"/>
<rect x="507.0" y="146.7" width="6.2" height="2.7" fill="#d5c9c0" transform="rotate(-20 507.0 146.7)"/>
<rect x="507.5" y="152.6" width="6.3" height="3.5" fill="#d5c9c0" transform="rotate(0 507.5 152.6)"/>
<rect x="507.6" y="164.0" width="3.1" height="4.1" fill="#d5c9c0" transform="rotate(-20 507.6 164.0)"/>
<rect x="508.2" y="170.9" width="3.7" height="3.9" fill="#d5c9c0" transform="rotate(30 508.2 170.9)"/>
<rect x="509.8" y="176.5" width="5.1" height="3.8" fill="#d5c9c0" transform="rotate(-20 509.8 176.5)"/>
<rect x="508.2" y="181.0" width="4.5" height="3.3" fill="#d5c9c0" transform="rotate(-20 508.2 181.0)"/>
<rect x="507.9" y="193.8" width="6.3" height="4.4" fill="#d5c9c0" transform="rotate(30 507.9 193.8)"/>
<rect x="507.5" y="200.9" width="3.2" height="4.1" fill="#d5c9c0" transform="rotate(25 507.5 200.9)"/>
<rect x="508.7" y="205.5" width="6.4" height="3.2" fill="#d5c9c0" transform="rotate(30 508.7 205.5)"/>
<rect x="507.9" y="212.1" width="3.4" height="4.2" fill="#d5c9c0" transform="rotate(-20 507.9 212.1)"/>
<rect x="509.1" y="224.4" width="6.4" height="3.9" fill="#d5c9c0" transform="rotate(30 509.1 224.4)"/>
<rect x="509.2" y="229.6" width="3.9" height="3.1" fill="#d5c9c0" transform="rotate(30 509.2 229.6)"/>
<rect x="515.9" y="133.2" width="6.1" height="2.8" fill="#d5c9c0" transform="rotate(-20 515.9 133.2)"/>
<rect x="516.5" y="146.8" width="5.7" height="2.8" fill="#d5c9c0" transform="rotate(-20 516.5 146.8)"/>
<rect x="514.0" y="158.9" width="5.3" height="3.0" fill="#d5c9c0" transform="rotate(0 514.0 158.9)"/>
<rect x="515.4" y="176.6" width="3.7" height="3.3" fill="#d5c9c0" transform="rotate(-30 515.4 176.6)"/>
<rect x="516.7" y="182.2" width="5.7" height="3.8" fill="#d5c9c0" transform="rotate(-30 516.7 182.2)"/>
<rect x="516.1" y="200.1" width="5.6" height="3.4" fill="#d5c9c0" transform="rotate(0 516.1 200.1)"/>
<rect x="514.7" y="211.3" width="4.7" height="2.6" fill="#d5c9c0" transform="rotate(30 514.7 211.3)"/>
<rect x="514.5" y="230.2" width="5.6" height="2.8" fill="#d5c9c0" transform="rotate(-20 514.5 230.2)"/>
<rect x="522.7" y="134.3" width="5.9" height="3.2" fill="#d5c9c0" transform="rotate(30 522.7 134.3)"/>
<rect x="522.1" y="152.3" width="3.1" height="2.6" fill="#d5c9c0" transform="rotate(-20 522.1 152.3)"/>
<rect x="522.5" y="164.5" width="3.5" height="2.9" fill="#d5c9c0" transform="rotate(30 522.5 164.5)"/>
<rect x="523.6" y="175.7" width="4.7" height="3.6" fill="#d5c9c0" transform="rotate(25 523.6 175.7)"/>
<rect x="522.0" y="181.5" width="3.2" height="3.1" fill="#d5c9c0" transform="rotate(-20 522.0 181.5)"/>
<rect x="522.5" y="193.5" width="4.8" height="4.4" fill="#d5c9c0" transform="rotate(30 522.5 193.5)"/>
<rect x="522.0" y="205.6" width="5.1" height="3.8" fill="#d5c9c0" transform="rotate(0 522.0 205.6)"/>
<rect x="522.7" y="211.8" width="5.0" height="3.3" fill="#d5c9c0" transform="rotate(0 522.7 211.8)"/>
<rect x="521.6" y="218.8" width="5.1" height="3.8" fill="#d5c9c0" transform="rotate(-30 521.6 218.8)"/>
<rect x="530.0" y="163.9" width="5.7" height="2.7" fill="#d5c9c0" transform="rotate(25 530.0 163.9)"/>
<rect x="528.3" y="176.9" width="3.0" height="4.2" fill="#d5c9c0" transform="rotate(25 528.3 176.9)"/>
<rect x="528.9" y="193.8" width="4.1" height="3.4" fill="#d5c9c0" transform="rotate(-30 528.9 193.8)"/>
<rect x="529.7" y="205.1" width="3.4" height="4.1" fill="#d5c9c0" transform="rotate(-30 529.7 205.1)"/>
<rect x="528.2" y="218.4" width="5.1" height="4.5" fill="#d5c9c0" transform="rotate(25 528.2 218.4)"/>
<rect x="529.2" y="223.2" width="5.3" height="2.9" fill="#d5c9c0" transform="rotate(25 529.2 223.2)"/>
<rect x="535.0" y="134.3" width="6.5" height="4.2" fill="#d5c9c0" transform="rotate(25 535.0 134.3)"/>
<rect x="535.1" y="146.4" width="3.8" height="4.0" fill="#d5c9c0" transform="rotate(25 535.1 146.4)"/>
<rect x="537.2" y="158.4" width="3.5" height="4.0" fill="#d5c9c0" transform="rotate(-20 537.2 158.4)"/>
<rect x="537.8" y="175.5" width="6.4" height="3.9" fill="#d5c9c0" transform="rotate(0 537.8 175.5)"/>
<rect x="537.6" y="182.4" width="5.2" height="3.3" fill="#d5c9c0" transform="rotate(-20 537.6 182.4)"/>
<rect x="537.6" y="194.0" width="3.2" height="3.2" fill="#d5c9c0" transform="rotate(-30 537.6 194.0)"/>
<rect x="535.5" y="206.9" width="3.4" height="4.4" fill="#d5c9c0" transform="rotate(25 535.5 206.9)"/>
<rect x="536.2" y="218.6" width="6.3" height="4.1" fill="#d5c9c0" transform="rotate(-30 536.2 218.6)"/>
<rect x="535.8" y="224.2" width="5.3" height="4.1" fill="#d5c9c0" transform="rotate(-30 535.8 224.2)"/>
<rect x="536.8" y="231.0" width="5.9" height="3.7" fill="#d5c9c0" transform="rotate(-20 536.8 231.0)"/>
<rect x="543.2" y="145.8" width="5.7" height="3.0" fill="#d5c9c0" transform="rotate(30 543.2 145.8)"/>
<rect x="542.0" y="151.5" width="4.5" height="3.7" fill="#d5c9c0" transform="rotate(0 542.0 151.5)"/>
<rect x="542.4" y="158.8" width="6.5" height="2.8" fill="#d5c9c0" transform="rotate(-30 542.4 158.8)"/>
<rect x="542.3" y="176.1" width="5.8" height="2.9" fill="#d5c9c0" transform="rotate(25 542.3 176.1)"/>
<rect x="542.2" y="181.8" width="5.5" height="4.4" fill="#d5c9c0" transform="rotate(-30 542.2 181.8)"/>
<rect x="542.3" y="200.6" width="5.7" height="3.0" fill="#d5c9c0" transform="rotate(-30 542.3 200.6)"/>
<rect x="542.8" y="206.7" width="4.1" height="3.5" fill="#d5c9c0" transform="rotate(25 542.8 206.7)"/>
<rect x="542.6" y="211.4" width="5.5" height="3.2" fill="#d5c9c0" transform="rotate(-30 542.6 211.4)"/>
<rect x="544.3" y="218.7" width="3.9" height="4.3" fill="#d5c9c0" transform="rotate(30 544.3 218.7)"/>
<rect x="542.3" y="224.3" width="5.8" height="2.8" fill="#d5c9c0" transform="rotate(-30 542.3 224.3)"/>
<rect x="542.8" y="230.2" width="3.3" height="2.9" fill="#d5c9c0" transform="rotate(-30 542.8 230.2)"/>
<rect x="550.7" y="133.5" width="5.7" height="3.4" fill="#d5c9c0" transform="rotate(30 550.7 133.5)"/>
<rect x="549.1" y="157.4" width="3.6" height="2.7" fill="#d5c9c0" transform="rotate(0 549.1 157.4)"/>
<rect x="550.1" y="164.4" width="4.7" height="4.2" fill="#d5c9c0" transform="rotate(0 550.1 164.4)"/>
<rect x="550.0" y="193.5" width="3.3" height="4.3" fill="#d5c9c0" transform="rotate(-30 550.0 193.5)"/>
<rect x="550.3" y="199.3" width="6.4" height="4.5" fill="#d5c9c0" transform="rotate(25 550.3 199.3)"/>
<rect x="551.8" y="206.9" width="3.2" height="3.6" fill="#d5c9c0" transform="rotate(0 551.8 206.9)"/>
<rect x="551.4" y="218.4" width="5.3" height="4.5" fill="#d5c9c0" transform="rotate(0 551.4 218.4)"/>
<rect x="550.0" y="223.0" width="3.7" height="4.0" fill="#d5c9c0" transform="rotate(-30 550.0 223.0)"/>
<rect x="557.0" y="139.5" width="3.4" height="3.5" fill="#d5c9c0" transform="rotate(25 557.0 139.5)"/>
<rect x="558.4" y="146.8" width="6.1" height="3.4" fill="#d5c9c0" transform="rotate(25 558.4 146.8)"/>
<rect x="558.5" y="157.2" width="5.2" height="3.2" fill="#d5c9c0" transform="rotate(25 558.5 157.2)"/>
<rect x="556.1" y="181.2" width="6.4" height="3.1" fill="#d5c9c0" transform="rotate(25 556.1 181.2)"/>
<rect x="557.9" y="187.3" width="3.8" height="2.6" fill="#d5c9c0" transform="rotate(30 557.9 187.3)"/>
<rect x="558.6" y="199.5" width="4.4" height="2.8" fill="#d5c9c0" transform="rotate(-20 558.6 199.5)"/>
<rect x="558.4" y="211.5" width="3.4" height="3.4" fill="#d5c9c0" transform="rotate(30 558.4 211.5)"/>
<rect x="558.9" y="217.1" width="6.1" height="3.8" fill="#d5c9c0" transform="rotate(25 558.9 217.1)"/>
<rect x="565.3" y="134.9" width="4.5" height="3.0" fill="#d5c9c0" transform="rotate(25 565.3 134.9)"/>
<rect x="563.9" y="146.8" width="3.2" height="4.0" fill="#d5c9c0" transform="rotate(-20 563.9 146.8)"/>
<rect x="564.9" y="151.9" width="4.8" height="3.5" fill="#d5c9c0" transform="rotate(30 564.9 151.9)"/>
<rect x="565.5" y="158.1" width="3.7" height="3.4" fill="#d5c9c0" transform="rotate(30 565.5 158.1)"/>
<rect x="564.7" y="163.3" width="3.6" height="4.0" fill="#d5c9c0" transform="rotate(25 564.7 163.3)"/>
<rect x="563.2" y="169.2" width="5.1" height="3.5" fill="#d5c9c0" transform="rotate(-20 563.2 169.2)"/>
<rect x="563.4" y="176.3" width="5.2" height="2.9" fill="#d5c9c0" transform="rotate(-20 563.4 176.3)"/>
<rect x="563.2" y="182.5" width="4.4" height="3.9" fill="#d5c9c0" transform="rotate(0 563.2 182.5)"/>
<rect x="564.0" y="187.6" width="5.2" height="4.4" fill="#d5c9c0" transform="rotate(0 564.0 187.6)"/>
<rect x="565.7" y="194.0" width="6.1" height="3.0" fill="#d5c9c0" transform="rotate(25 565.7 194.0)"/>
<rect x="565.1" y="212.1" width="6.0" height="3.2" fill="#d5c9c0" transform="rotate(30 565.1 212.1)"/>
<rect x="564.1" y="223.5" width="5.9" height="4.3" fill="#d5c9c0" transform="rotate(30 564.1 223.5)"/>
<rect x="570.3" y="140.5" width="4.6" height="2.6" fill="#d5c9c0" transform="rotate(-30 570.3 140.5)"/>
<rect x="570.7" y="145.2" width="5.2" height="2.8" fill="#d5c9c0" transform="rotate(-20 570.7 145.2)"/>
<rect x="572.5" y="151.1" width="3.3" height="3.9" fill="#d5c9c0" transform="rotate(25 572.5 151.1)"/>
<rect x="572.5" y="158.3" width="4.6" height="3.0" fill="#d5c9c0" transform="rotate(30 572.5 158.3)"/>
<rect x="572.6" y="164.4" width="3.2" height="2.7" fill="#d5c9c0" transform="rotate(30 572.6 164.4)"/>
<rect x="570.4" y="182.8" width="4.9" height="3.0" fill="#d5c9c0" transform="rotate(25 570.4 182.8)"/>
<rect x="571.7" y="188.5" width="3.6" height="4.2" fill="#d5c9c0" transform="rotate(30 571.7 188.5)"/>
<rect x="572.9" y="211.1" width="4.3" height="3.3" fill="#d5c9c0" transform="rotate(-20 572.9 211.1)"/>
<rect x="578.2" y="140.1" width="4.1" height="2.8" fill="#d5c9c0" transform="rotate(-20 578.2 140.1)"/>
<rect x="578.3" y="146.3" width="4.3" height="3.6" fill="#d5c9c0" transform="rotate(0 578.3 146.3)"/>
<rect x="577.6" y="152.3" width="3.8" height="3.3" fill="#d5c9c0" transform="rotate(30 577.6 152.3)"/>
<rect x="578.9" y="193.5" width="5.4" height="3.0" fill="#d5c9c0" transform="rotate(-30 578.9 193.5)"/>
<rect x="577.3" y="205.2" width="3.0" height="3.0" fill="#d5c9c0" transform="rotate(0 577.3 205.2)"/>
<rect x="577.9" y="212.3" width="3.4" height="3.7" fill="#d5c9c0" transform="rotate(-30 577.9 212.3)"/>
<rect x="578.8" y="224.9" width="4.5" height="3.5" fill="#d5c9c0" transform="rotate(-20 578.8 224.9)"/>
<rect x="586.2" y="140.5" width="4.0" height="3.4" fill="#d5c9c0" transform="rotate(-30 586.2 140.5)"/>
<rect x="585.2" y="146.1" width="4.3" height="4.3" fill="#d5c9c0" transform="rotate(-20 585.2 146.1)"/>
<rect x="584.9" y="157.5" width="3.8" height="3.5" fill="#d5c9c0" transform="rotate(30 584.9 157.5)"/>
<rect x="586.8" y="169.3" width="6.3" height="3.1" fill="#d5c9c0" transform="rotate(-20 586.8 169.3)"/>
<rect x="584.9" y="177.0" width="4.0" height="4.0" fill="#d5c9c0" transform="rotate(25 584.9 177.0)"/>
<rect x="586.0" y="194.0" width="5.9" height="3.2" fill="#d5c9c0" transform="rotate(0 586.0 194.0)"/>
<rect x="587.0" y="200.4" width="6.3" height="3.3" fill="#d5c9c0" transform="rotate(-20 587.0 200.4)"/>
<rect x="584.6" y="206.2" width="4.0" height="4.2" fill="#d5c9c0" transform="rotate(0 584.6 206.2)"/>
<rect x="586.4" y="230.4" width="6.2" height="2.8" fill="#d5c9c0" transform="rotate(0 586.4 230.4)"/>
<rect x="593.3" y="134.2" width="4.7" height="4.4" fill="#d5c9c0" transform="rotate(-30 593.3 134.2)"/>
<rect x="593.5" y="139.6" width="5.2" height="2.7" fill="#d5c9c0" transform="rotate(30 593.5 139.6)"/>
<rect x="592.1" y="151.7" width="4.8" height="3.7" fill="#d5c9c0" transform="rotate(-20 592.1 151.7)"/>
<rect x="593.2" y="159.0" width="4.3" height="3.1" fill="#d5c9c0" transform="rotate(-30 593.2 159.0)"/>
<rect x="591.4" y="164.2" width="5.0" height="2.7" fill="#d5c9c0" transform="rotate(-20 591.4 164.2)"/>
<rect x="593.5" y="170.7" width="6.4" height="2.9" fill="#d5c9c0" transform="rotate(30 593.5 170.7)"/>
<rect x="591.8" y="188.8" width="4.0" height="3.6" fill="#d5c9c0" transform="rotate(-20 591.8 188.8)"/>
<rect x="594.0" y="194.0" width="4.8" height="3.9" fill="#d5c9c0" transform="rotate(30 594.0 194.0)"/>
<rect x="591.1" y="200.4" width="4.6" height="2.5" fill="#d5c9c0" transform="rotate(0 591.1 200.4)"/>
<rect x="591.3" y="205.7" width="4.4" height="3.6" fill="#d5c9c0" transform="rotate(-30 591.3 205.7)"/>
<rect x="591.6" y="211.8" width="4.4" height="4.0" fill="#d5c9c0" transform="rotate(-30 591.6 211.8)"/>
<rect x="592.6" y="218.6" width="3.6" height="3.1" fill="#d5c9c0" transform="rotate(0 592.6 218.6)"/>
<rect x="591.3" y="230.8" width="5.4" height="4.1" fill="#d5c9c0" transform="rotate(-30 591.3 230.8)"/>
<rect x="598.5" y="139.6" width="4.8" height="3.5" fill="#d5c9c0" transform="rotate(25 598.5 139.6)"/>
<rect x="598.2" y="146.1" width="3.4" height="3.6" fill="#d5c9c0" transform="rotate(0 598.2 146.1)"/>
<rect x="598.0" y="158.4" width="4.9" height="4.3" fill="#d5c9c0" transform="rotate(30 598.0 158.4)"/>
<rect x="599.5" y="182.1" width="3.9" height="3.8" fill="#d5c9c0" transform="rotate(-30 599.5 182.1)"/>
<rect x="598.4" y="187.4" width="5.1" height="2.8" fill="#d5c9c0" transform="rotate(-30 598.4 187.4)"/>
<rect x="598.3" y="199.3" width="4.8" height="4.1" fill="#d5c9c0" transform="rotate(-30 598.3 199.3)"/>
<rect x="600.4" y="206.3" width="5.4" height="3.7" fill="#d5c9c0" transform="rotate(25 600.4 206.3)"/>
<rect x="598.5" y="217.5" width="3.3" height="4.3" fill="#d5c9c0" transform="rotate(-30 598.5 217.5)"/>
<rect x="598.6" y="224.2" width="3.1" height="2.9" fill="#d5c9c0" transform="rotate(30 598.6 224.2)"/>
<rect x="606.9" y="139.5" width="3.2" height="4.4" fill="#d5c9c0" transform="rotate(25 606.9 139.5)"/>
<rect x="607.7" y="146.6" width="4.1" height="3.7" fill="#d5c9c0" transform="rotate(30 607.7 146.6)"/>
<rect x="607.0" y="158.3" width="5.0" height="3.3" fill="#d5c9c0" transform="rotate(30 607.0 158.3)"/>
<rect x="607.4" y="169.5" width="3.6" height="3.2" fill="#d5c9c0" transform="rotate(25 607.4 169.5)"/>
<rect x="607.6" y="175.8" width="4.3" height="3.2" fill="#d5c9c0" transform="rotate(30 607.6 175.8)"/>
<rect x="607.0" y="182.9" width="4.5" height="4.3" fill="#d5c9c0" transform="rotate(-30 607.0 182.9)"/>
<rect x="605.6" y="187.6" width="3.8" height="2.6" fill="#d5c9c0" transform="rotate(0 605.6 187.6)"/>
<rect x="605.5" y="194.4" width="3.3" height="3.0" fill="#d5c9c0" transform="rotate(25 605.5 194.4)"/>
<rect x="607.4" y="205.5" width="4.3" height="2.9" fill="#d5c9c0" transform="rotate(30 607.4 205.5)"/>
<rect x="607.9" y="211.4" width="6.3" height="3.5" fill="#d5c9c0" transform="rotate(25 607.9 211.4)"/>
<rect x="615.0" y="146.1" width="4.4" height="3.5" fill="#d5c9c0" transform="rotate(25 615.0 146.1)"/>
<rect x="613.5" y="158.1" width="3.9" height="4.0" fill="#d5c9c0" transform="rotate(30 613.5 158.1)"/>
<rect x="614.2" y="163.3" width="3.1" height="3.9" fill="#d5c9c0" transform="rotate(25 614.2 163.3)"/>
<rect x="612.6" y="176.8" width="3.2" height="4.3" fill="#d5c9c0" transform="rotate(-30 612.6 176.8)"/>
<rect x="614.2" y="187.2" width="4.0" height="4.1" fill="#d5c9c0" transform="rotate(30 614.2 187.2)"/>
<rect x="613.2" y="194.8" width="5.7" height="4.3" fill="#d5c9c0" transform="rotate(25 613.2 194.8)"/>
<rect x="613.1" y="206.6" width="5.4" height="4.3" fill="#d5c9c0" transform="rotate(0 613.1 206.6)"/>
<rect x="614.5" y="223.7" width="5.2" height="2.9" fill="#d5c9c0" transform="rotate(0 614.5 223.7)"/>
<rect x="613.8" y="229.4" width="5.4" height="3.3" fill="#d5c9c0" transform="rotate(-30 613.8 229.4)"/>
<rect x="619.6" y="133.6" width="4.3" height="2.6" fill="#d5c9c0" transform="rotate(-20 619.6 133.6)"/>
<rect x="620.5" y="158.0" width="6.2" height="3.8" fill="#d5c9c0" transform="rotate(-30 620.5 158.0)"/>
<rect x="619.0" y="164.7" width="5.7" height="3.1" fill="#d5c9c0" transform="rotate(0 619.0 164.7)"/>
<rect x="620.0" y="200.6" width="4.2" height="4.3" fill="#d5c9c0" transform="rotate(30 620.0 200.6)"/>
<rect x="621.2" y="212.7" width="4.0" height="2.7" fill="#d5c9c0" transform="rotate(30 621.2 212.7)"/>
<rect x="620.0" y="218.0" width="5.4" height="4.2" fill="#d5c9c0" transform="rotate(30 620.0 218.0)"/>
<rect x="621.0" y="223.4" width="5.4" height="4.2" fill="#d5c9c0" transform="rotate(25 621.0 223.4)"/>
<rect x="619.6" y="230.9" width="5.9" height="3.6" fill="#d5c9c0" transform="rotate(25 619.6 230.9)"/>
<rect x="628.9" y="134.3" width="4.9" height="3.0" fill="#d5c9c0" transform="rotate(0 628.9 134.3)"/>
<rect x="627.0" y="139.2" width="5.2" height="2.8" fill="#d5c9c0" transform="rotate(30 627.0 139.2)"/>
<rect x="626.7" y="152.0" width="4.6" height="4.4" fill="#d5c9c0" transform="rotate(-20 626.7 152.0)"/>
<rect x="628.1" y="164.2" width="3.8" height="3.8" fill="#d5c9c0" transform="rotate(0 628.1 164.2)"/>
<rect x="628.3" y="169.3" width="5.3" height="3.7" fill="#d5c9c0" transform="rotate(30 628.3 169.3)"/>
<rect x="626.6" y="182.4" width="3.0" height="3.5" fill="#d5c9c0" transform="rotate(0 626.6 182.4)"/>
<rect x="626.8" y="187.4" width="5.5" height="3.4" fill="#d5c9c0" transform="rotate(0 626.8 187.4)"/>
<rect x="627.3" y="194.1" width="4.0" height="3.6" fill="#d5c9c0" transform="rotate(0 627.3 194.1)"/>
<rect x="629.0" y="200.5" width="3.3" height="3.9" fill="#d5c9c0" transform="rotate(-30 629.0 200.5)"/>
<rect x="627.9" y="206.9" width="4.7" height="4.1" fill="#d5c9c0" transform="rotate(-20 627.9 206.9)"/>
<rect x="628.8" y="212.3" width="5.2" height="4.4" fill="#d5c9c0" transform="rotate(-20 628.8 212.3)"/>
<rect x="628.2" y="223.1" width="4.4" height="2.8" fill="#d5c9c0" transform="rotate(-20 628.2 223.1)"/>
<rect x="627.9" y="230.7" width="6.2" height="2.8" fill="#d5c9c0" transform="rotate(-20 627.9 230.7)"/>
<rect x="633.6" y="140.7" width="4.1" height="3.2" fill="#d5c9c0" transform="rotate(-30 633.6 140.7)"/>
<rect x="633.2" y="157.2" width="5.8" height="4.3" fill="#d5c9c0" transform="rotate(30 633.2 157.2)"/>
<rect x="634.5" y="175.3" width="4.0" height="3.7" fill="#d5c9c0" transform="rotate(0 634.5 175.3)"/>
<rect x="633.7" y="181.3" width="5.2" height="3.3" fill="#d5c9c0" transform="rotate(0 633.7 181.3)"/>
<rect x="633.7" y="193.7" width="3.1" height="3.7" fill="#d5c9c0" transform="rotate(-30 633.7 193.7)"/>
<rect x="633.8" y="200.3" width="4.8" height="3.3" fill="#d5c9c0" transform="rotate(-20 633.8 200.3)"/>
<rect x="633.0" y="206.9" width="3.6" height="3.9" fill="#d5c9c0" transform="rotate(30 633.0 206.9)"/>
<rect x="634.3" y="212.1" width="4.2" height="2.9" fill="#d5c9c0" transform="rotate(0 634.3 212.1)"/>
<rect x="634.6" y="217.9" width="4.9" height="3.8" fill="#d5c9c0" transform="rotate(25 634.6 217.9)"/>
<rect x="642.0" y="146.2" width="4.0" height="3.6" fill="#d5c9c0" transform="rotate(-20 642.0 146.2)"/>
<rect x="641.9" y="151.6" width="4.2" height="4.3" fill="#d5c9c0" transform="rotate(0 641.9 151.6)"/>
<rect x="642.2" y="164.4" width="3.5" height="3.7" fill="#d5c9c0" transform="rotate(-30 642.2 164.4)"/>
<rect x="641.6" y="176.1" width="4.4" height="2.7" fill="#d5c9c0" transform="rotate(25 641.6 176.1)"/>
<rect x="642.2" y="187.4" width="5.9" height="3.8" fill="#d5c9c0" transform="rotate(25 642.2 187.4)"/>
<rect x="640.8" y="194.0" width="4.9" height="3.0" fill="#d5c9c0" transform="rotate(-30 640.8 194.0)"/>
<rect x="648.5" y="140.0" width="5.9" height="4.4" fill="#d5c9c0" transform="rotate(-30 648.5 140.0)"/>
<rect x="649.5" y="145.8" width="3.6" height="4.4" fill="#d5c9c0" transform="rotate(-30 649.5 145.8)"/>
<rect x="647.3" y="151.7" width="5.2" height="3.3" fill="#d5c9c0" transform="rotate(0 647.3 151.7)"/>
<rect x="647.0" y="158.2" width="3.7" height="3.1" fill="#d5c9c0" transform="rotate(25 647.0 158.2)"/>
<rect x="649.7" y="164.2" width="6.1" height="3.6" fill="#d5c9c0" transform="rotate(-20 649.7 164.2)"/>
<rect x="649.2" y="169.7" width="5.7" height="3.9" fill="#d5c9c0" transform="rotate(-20 649.2 169.7)"/>
<rect x="648.1" y="176.5" width="6.3" height="3.9" fill="#d5c9c0" transform="rotate(0 648.1 176.5)"/>
<rect x="648.1" y="187.7" width="5.1" height="2.6" fill="#d5c9c0" transform="rotate(25 648.1 187.7)"/>
<rect x="647.6" y="193.9" width="5.9" height="3.7" fill="#d5c9c0" transform="rotate(0 647.6 193.9)"/>
<rect x="647.2" y="205.5" width="3.5" height="4.4" fill="#d5c9c0" transform="rotate(30 647.2 205.5)"/>
<rect x="650.0" y="224.5" width="3.9" height="3.4" fill="#d5c9c0" transform="rotate(0 650.0 224.5)"/>
<rect x="647.5" y="230.0" width="6.1" height="4.1" fill="#d5c9c0" transform="rotate(0 647.5 230.0)"/>
<rect x="655.9" y="134.3" width="5.1" height="4.2" fill="#d5c9c0" transform="rotate(25 655.9 134.3)"/>
<rect x="654.7" y="146.9" width="4.8" height="3.2" fill="#d5c9c0" transform="rotate(-30 654.7 146.9)"/>
<rect x="656.7" y="152.2" width="3.2" height="2.8" fill="#d5c9c0" transform="rotate(-20 656.7 152.2)"/>
<rect x="655.4" y="164.9" width="4.1" height="3.2" fill="#d5c9c0" transform="rotate(30 655.4 164.9)"/>
<rect x="654.1" y="169.9" width="6.5" height="2.6" fill="#d5c9c0" transform="rotate(25 654.1 169.9)"/>
<rect x="655.2" y="181.1" width="6.5" height="3.2" fill="#d5c9c0" transform="rotate(-30 655.2 181.1)"/>
<rect x="656.9" y="189.0" width="3.1" height="3.6" fill="#d5c9c0" transform="rotate(0 656.9 189.0)"/>
<rect x="654.8" y="218.6" width="6.1" height="4.4" fill="#d5c9c0" transform="rotate(0 654.8 218.6)"/>
<rect x="656.3" y="224.5" width="4.8" height="3.8" fill="#d5c9c0" transform="rotate(-20 656.3 224.5)"/>
<rect x="663.1" y="140.3" width="6.1" height="4.1" fill="#d5c9c0" transform="rotate(-30 663.1 140.3)"/>
<rect x="661.7" y="145.5" width="4.2" height="2.8" fill="#d5c9c0" transform="rotate(0 661.7 145.5)"/>
<rect x="662.2" y="164.5" width="6.3" height="3.7" fill="#d5c9c0" transform="rotate(25 662.2 164.5)"/>
<rect x="661.9" y="170.5" width="4.9" height="4.4" fill="#d5c9c0" transform="rotate(-20 661.9 170.5)"/>
<rect x="661.6" y="176.8" width="5.0" height="3.1" fill="#d5c9c0" transform="rotate(-20 661.6 176.8)"/>
<rect x="663.3" y="187.9" width="6.0" height="2.6" fill="#d5c9c0" transform="rotate(30 663.3 187.9)"/>
<rect x="661.5" y="194.8" width="4.9" height="4.0" fill="#d5c9c0" transform="rotate(-20 661.5 194.8)"/>
<rect x="661.1" y="199.1" width="4.6" height="4.3" fill="#d5c9c0" transform="rotate(-20 661.1 199.1)"/>
<rect x="663.2" y="218.9" width="5.1" height="2.7" fill="#d5c9c0" transform="rotate(-30 663.2 218.9)"/>
<rect x="661.4" y="223.4" width="4.9" height="4.3" fill="#d5c9c0" transform="rotate(-20 661.4 223.4)"/>
<rect x="669.0" y="134.5" width="5.3" height="3.3" fill="#d5c9c0" transform="rotate(-20 669.0 134.5)"/>
<rect x="670.6" y="140.6" width="3.3" height="3.7" fill="#d5c9c0" transform="rotate(30 670.6 140.6)"/>
<rect x="670.8" y="152.7" width="3.1" height="3.1" fill="#d5c9c0" transform="rotate(-20 670.8 152.7)"/>
<rect x="669.8" y="158.4" width="4.2" height="2.7" fill="#d5c9c0" transform="rotate(25 669.8 158.4)"/>
<rect x="669.6" y="164.7" width="4.3" height="3.2" fill="#d5c9c0" transform="rotate(-20 669.6 164.7)"/>
<rect x="669.8" y="170.1" width="5.3" height="3.7" fill="#d5c9c0" transform="rotate(-20 669.8 170.1)"/>
<rect x="669.9" y="176.6" width="4.7" height="2.6" fill="#d5c9c0" transform="rotate(-20 669.9 176.6)"/>
<rect x="670.1" y="188.1" width="4.3" height="3.6" fill="#d5c9c0" transform="rotate(-20 670.1 188.1)"/>
<rect x="668.0" y="194.0" width="5.3" height="4.0" fill="#d5c9c0" transform="rotate(-20 668.0 194.0)"/>
<rect x="669.9" y="199.8" width="6.4" height="4.4" fill="#d5c9c0" transform="rotate(-30 669.9 199.8)"/>
<rect x="668.2" y="206.0" width="4.9" height="2.9" fill="#d5c9c0" transform="rotate(-30 668.2 206.0)"/>
<rect x="668.4" y="211.4" width="5.6" height="4.3" fill="#d5c9c0" transform="rotate(25 668.4 211.4)"/>
<rect x="669.1" y="218.4" width="4.5" height="4.2" fill="#d5c9c0" transform="rotate(25 669.1 218.4)"/>
<rect x="670.4" y="229.9" width="4.1" height="4.3" fill="#d5c9c0" transform="rotate(0 670.4 229.9)"/>
<rect x="677.4" y="140.8" width="5.4" height="3.2" fill="#d5c9c0" transform="rotate(25 677.4 140.8)"/>
<rect x="677.8" y="152.9" width="5.2" height="2.9" fill="#d5c9c0" transform="rotate(-20 677.8 152.9)"/>
<rect x="677.1" y="157.5" width="4.2" height="3.2" fill="#d5c9c0" transform="rotate(30 677.1 157.5)"/>
<rect x="678.0" y="169.4" width="5.0" height="2.8" fill="#d5c9c0" transform="rotate(-20 678.0 169.4)"/>
<rect x="675.9" y="181.2" width="3.0" height="4.2" fill="#d5c9c0" transform="rotate(25 675.9 181.2)"/>
<rect x="677.0" y="188.2" width="4.6" height="3.7" fill="#d5c9c0" transform="rotate(25 677.0 188.2)"/>
<rect x="677.3" y="205.9" width="4.5" height="2.8" fill="#d5c9c0" transform="rotate(-20 677.3 205.9)"/>
<rect x="677.7" y="223.3" width="4.1" height="3.5" fill="#d5c9c0" transform="rotate(-20 677.7 223.3)"/>
<rect x="675.5" y="230.4" width="3.3" height="3.2" fill="#d5c9c0" transform="rotate(30 675.5 230.4)"/>
<rect x="682.7" y="146.6" width="5.4" height="2.6" fill="#d5c9c0" transform="rotate(-30 682.7 146.6)"/>
<rect x="684.7" y="175.1" width="3.4" height="4.4" fill="#d5c9c0" transform="rotate(25 684.7 175.1)"/>
<rect x="682.0" y="181.4" width="4.9" height="3.8" fill="#d5c9c0" transform="rotate(-30 682.0 181.4)"/>
<rect x="682.3" y="187.7" width="4.7" height="4.3" fill="#d5c9c0" transform="rotate(-20 682.3 187.7)"/>
<rect x="682.2" y="212.4" width="3.1" height="3.0" fill="#d5c9c0" transform="rotate(0 682.2 212.4)"/>
<rect x="682.1" y="218.6" width="6.3" height="3.0" fill="#d5c9c0" transform="rotate(-20 682.1 218.6)"/>
<rect x="690.6" y="134.4" width="6.4" height="4.2" fill="#d5c9c0" transform="rotate(-20 690.6 134.4)"/>
<rect x="690.0" y="139.8" width="6.4" height="3.3" fill="#d5c9c0" transform="rotate(30 690.0 139.8)"/>
<rect x="690.5" y="171.0" width="5.4" height="4.0" fill="#d5c9c0" transform="rotate(25 690.5 171.0)"/>
<rect x="690.9" y="187.1" width="5.5" height="3.3" fill="#d5c9c0" transform="rotate(-30 690.9 187.1)"/>
<rect x="690.9" y="194.1" width="4.1" height="4.4" fill="#d5c9c0" transform="rotate(0 690.9 194.1)"/>
<rect x="690.9" y="199.9" width="4.2" height="3.6" fill="#d5c9c0" transform="rotate(30 690.9 199.9)"/>
<rect x="690.9" y="206.5" width="4.3" height="3.9" fill="#d5c9c0" transform="rotate(30 690.9 206.5)"/>
<rect x="691.0" y="218.7" width="3.3" height="4.1" fill="#d5c9c0" transform="rotate(25 691.0 218.7)"/>
<rect x="698.5" y="134.7" width="4.2" height="3.7" fill="#d5c9c0" transform="rotate(-30 698.5 134.7)"/>
<rect x="696.4" y="140.9" width="4.9" height="3.5" fill="#d5c9c0" transform="rotate(-30 696.4 140.9)"/>
<rect x="697.1" y="146.3" width="3.5" height="3.8" fill="#d5c9c0" transform="rotate(25 697.1 146.3)"/>
<rect x="697.1" y="176.7" width="5.9" height="2.7" fill="#d5c9c0" transform="rotate(25 697.1 176.7)"/>
<rect x="697.1" y="188.3" width="4.8" height="3.1" fill="#d5c9c0" transform="rotate(0 697.1 188.3)"/>
<rect x="696.9" y="193.9" width="3.4" height="3.8" fill="#d5c9c0" transform="rotate(25 696.9 193.9)"/>
<rect x="698.0" y="205.7" width="4.8" height="3.0" fill="#d5c9c0" transform="rotate(-20 698.0 205.7)"/>
<rect x="698.4" y="211.5" width="4.9" height="2.5" fill="#d5c9c0" transform="rotate(-20 698.4 211.5)"/>
<rect x="696.5" y="218.4" width="4.0" height="3.1" fill="#d5c9c0" transform="rotate(25 696.5 218.4)"/>
<rect x="697.3" y="224.1" width="4.7" height="2.7" fill="#d5c9c0" transform="rotate(25 697.3 224.1)"/>
<rect x="698.4" y="230.2" width="4.3" height="2.6" fill="#d5c9c0" transform="rotate(30 698.4 230.2)"/>
<rect x="703.1" y="134.5" width="6.4" height="3.4" fill="#d5c9c0" transform="rotate(-30 703.1 134.5)"/>
<rect x="704.2" y="146.2" width="6.2" height="2.9" fill="#d5c9c0" transform="rotate(-30 704.2 146.2)"/>
<rect x="705.0" y="151.7" width="3.2" height="4.0" fill="#d5c9c0" transform="rotate(30 705.0 151.7)"/>
<rect x="704.2" y="158.9" width="5.3" height="4.1" fill="#d5c9c0" transform="rotate(0 704.2 158.9)"/>
<rect x="704.4" y="170.7" width="4.5" height="3.4" fill="#d5c9c0" transform="rotate(0 704.4 170.7)"/>
<rect x="704.5" y="176.0" width="5.9" height="3.8" fill="#d5c9c0" transform="rotate(25 704.5 176.0)"/>
<rect x="703.1" y="182.4" width="4.9" height="4.0" fill="#d5c9c0" transform="rotate(30 703.1 182.4)"/>
<rect x="703.7" y="187.2" width="5.9" height="2.7" fill="#d5c9c0" transform="rotate(0 703.7 187.2)"/>
<rect x="704.4" y="200.6" width="3.7" height="3.2" fill="#d5c9c0" transform="rotate(0 704.4 200.6)"/>
<rect x="704.2" y="223.1" width="5.2" height="3.1" fill="#d5c9c0" transform="rotate(25 704.2 223.1)"/>
<rect x="703.0" y="231.0" width="4.0" height="3.0" fill="#d5c9c0" transform="rotate(-20 703.0 231.0)"/>
<rect x="712.0" y="133.6" width="4.4" height="4.3" fill="#d5c9c0" transform="rotate(0 712.0 133.6)"/>
<rect x="710.7" y="139.8" width="4.5" height="3.6" fill="#d5c9c0" transform="rotate(-20 710.7 139.8)"/>
<rect x="710.2" y="146.1" width="4.3" height="3.4" fill="#d5c9c0" transform="rotate(30 710.2 146.1)"/>
<rect x="712.8" y="157.7" width="4.6" height="3.9" fill="#d5c9c0" transform="rotate(0 712.8 157.7)"/>
<rect x="710.2" y="170.9" width="5.9" height="2.6" fill="#d5c9c0" transform="rotate(25 710.2 170.9)"/>
<rect x="712.1" y="182.6" width="5.1" height="3.4" fill="#d5c9c0" transform="rotate(30 712.1 182.6)"/>
<rect x="710.6" y="187.4" width="6.0" height="2.7" fill="#d5c9c0" transform="rotate(25 710.6 187.4)"/>
<rect x="711.8" y="199.4" width="6.2" height="3.6" fill="#d5c9c0" transform="rotate(25 711.8 199.4)"/>
<rect x="712.0" y="206.3" width="4.0" height="2.9" fill="#d5c9c0" transform="rotate(25 712.0 206.3)"/>
<rect x="712.8" y="211.4" width="3.4" height="2.7" fill="#d5c9c0" transform="rotate(0 712.8 211.4)"/>
<rect x="712.0" y="223.5" width="6.2" height="3.9" fill="#d5c9c0" transform="rotate(25 712.0 223.5)"/>
<rect x="717.5" y="139.9" width="5.7" height="4.2" fill="#d5c9c0" transform="rotate(-20 717.5 139.9)"/>
<rect x="717.8" y="158.1" width="3.8" height="4.4" fill="#d5c9c0" transform="rotate(25 717.8 158.1)"/>
<rect x="717.1" y="163.8" width="5.2" height="2.9" fill="#d5c9c0" transform="rotate(-30 717.1 163.8)"/>
<rect x="717.4" y="175.4" width="4.2" height="3.3" fill="#d5c9c0" transform="rotate(0 717.4 175.4)"/>
<rect x="719.8" y="189.0" width="6.3" height="3.6" fill="#d5c9c0" transform="rotate(-20 719.8 189.0)"/>
<rect x="717.1" y="194.6" width="6.1" height="4.3" fill="#d5c9c0" transform="rotate(25 717.1 194.6)"/>
<rect x="719.6" y="200.2" width="4.9" height="2.7" fill="#d5c9c0" transform="rotate(25 719.6 200.2)"/>
<rect x="719.3" y="206.5" width="6.2" height="3.7" fill="#d5c9c0" transform="rotate(-20 719.3 206.5)"/>
<rect x="718.8" y="212.9" width="4.2" height="4.4" fill="#d5c9c0" transform="rotate(-20 718.8 212.9)"/>
<rect x="718.0" y="217.9" width="3.9" height="4.0" fill="#d5c9c0" transform="rotate(25 718.0 217.9)"/>
<rect x="719.5" y="224.6" width="5.5" height="3.4" fill="#d5c9c0" transform="rotate(-30 719.5 224.6)"/>
<rect x="717.5" y="229.8" width="3.1" height="2.6" fill="#d5c9c0" transform="rotate(-30 717.5 229.8)"/>
<rect x="725.9" y="133.3" width="5.0" height="3.2" fill="#d5c9c0" transform="rotate(-20 725.9 133.3)"/>
<rect x="726.0" y="151.2" width="3.0" height="3.8" fill="#d5c9c0" transform="rotate(30 726.0 151.2)"/>
<rect x="724.8" y="157.2" width="3.8" height="2.8" fill="#d5c9c0" transform="rotate(-20 724.8 157.2)"/>
<rect x="724.4" y="163.9" width="3.6" height="3.6" fill="#d5c9c0" transform="rotate(-30 724.4 163.9)"/>
<rect x="726.8" y="169.6" width="4.9" height="4.5" fill="#d5c9c0" transform="rotate(25 726.8 169.6)"/>
<rect x="724.7" y="181.2" width="3.4" height="2.6" fill="#d5c9c0" transform="rotate(-30 724.7 181.2)"/>
<rect x="726.2" y="187.2" width="3.6" height="4.2" fill="#d5c9c0" transform="rotate(0 726.2 187.2)"/>
<rect x="725.9" y="193.2" width="5.0" height="2.7" fill="#d5c9c0" transform="rotate(-30 725.9 193.2)"/>
<rect x="724.7" y="200.5" width="4.8" height="4.1" fill="#d5c9c0" transform="rotate(25 724.7 200.5)"/>
<rect x="725.0" y="205.2" width="3.8" height="4.0" fill="#d5c9c0" transform="rotate(25 725.0 205.2)"/>
<rect x="726.4" y="217.9" width="6.2" height="2.5" fill="#d5c9c0" transform="rotate(30 726.4 217.9)"/>
<rect x="726.4" y="229.3" width="4.8" height="2.8" fill="#d5c9c0" transform="rotate(-20 726.4 229.3)"/>
<rect x="733.8" y="140.4" width="5.5" height="2.6" fill="#d5c9c0" transform="rotate(0 733.8 140.4)"/>
<rect x="732.5" y="152.6" width="6.2" height="4.0" fill="#d5c9c0" transform="rotate(0 732.5 152.6)"/>
<rect x="732.9" y="158.7" width="5.8" height="2.7" fill="#d5c9c0" transform="rotate(-20 732.9 158.7)"/>
<rect x="733.3" y="176.0" width="3.9" height="3.9" fill="#d5c9c0" transform="rotate(-20 733.3 176.0)"/>
<rect x="733.5" y="212.6" width="6.0" height="3.1" fill="#d5c9c0" transform="rotate(-30 733.5 212.6)"/>
<rect x="733.8" y="217.2" width="6.4" height="4.1" fill="#d5c9c0" transform="rotate(-20 733.8 217.2)"/>
<rect x="739.8" y="134.1" width="6.1" height="3.7" fill="#d5c9c0" transform="rotate(0 739.8 134.1)"/>
<rect x="740.4" y="140.6" width="5.4" height="4.4" fill="#d5c9c0" transform="rotate(30 740.4 140.6)"/>
<rect x="738.3" y="146.3" width="5.9" height="3.2" fill="#d5c9c0" transform="rotate(-30 738.3 146.3)"/>
<rect x="738.9" y="157.6" width="5.1" height="4.4" fill="#d5c9c0" transform="rotate(30 738.9 157.6)"/>
<rect x="739.8" y="163.9" width="4.2" height="2.9" fill="#d5c9c0" transform="rotate(-20 739.8 163.9)"/>
<rect x="739.4" y="169.1" width="4.2" height="4.5" fill="#d5c9c0" transform="rotate(25 739.4 169.1)"/>
<rect x="740.0" y="182.6" width="3.4" height="3.9" fill="#d5c9c0" transform="rotate(0 740.0 182.6)"/>
<rect x="740.7" y="187.8" width="4.2" height="2.8" fill="#d5c9c0" transform="rotate(25 740.7 187.8)"/>
<rect x="740.7" y="194.2" width="6.1" height="3.3" fill="#d5c9c0" transform="rotate(30 740.7 194.2)"/>
<rect x="740.6" y="200.6" width="5.1" height="4.2" fill="#d5c9c0" transform="rotate(25 740.6 200.6)"/>
<rect x="738.0" y="206.7" width="3.4" height="3.0" fill="#d5c9c0" transform="rotate(-30 738.0 206.7)"/>
<rect x="739.1" y="217.2" width="4.9" height="4.2" fill="#d5c9c0" transform="rotate(-30 739.1 217.2)"/>
<rect x="740.3" y="229.5" width="4.5" height="3.5" fill="#d5c9c0" transform="rotate(-20 740.3 229.5)"/>
<rect x="747.9" y="133.7" width="5.3" height="3.8" fill="#d5c9c0" transform="rotate(30 747.9 133.7)"/>
<rect x="747.0" y="152.0" width="5.4" height="2.5" fill="#d5c9c0" transform="rotate(0 747.0 152.0)"/>
<rect x="747.3" y="164.8" width="5.6" height="4.0" fill="#d5c9c0" transform="rotate(0 747.3 164.8)"/>
<rect x="745.0" y="176.9" width="4.0" height="2.9" fill="#d5c9c0" transform="rotate(-30 745.0 176.9)"/>
<rect x="748.0" y="181.3" width="5.1" height="4.5" fill="#d5c9c0" transform="rotate(25 748.0 181.3)"/>
<rect x="746.6" y="187.8" width="6.4" height="3.8" fill="#d5c9c0" transform="rotate(30 746.6 187.8)"/>
<rect x="747.9" y="193.7" width="6.2" height="3.1" fill="#d5c9c0" transform="rotate(-30 747.9 193.7)"/>
<rect x="745.1" y="200.1" width="6.1" height="2.9" fill="#d5c9c0" transform="rotate(0 745.1 200.1)"/>
<rect x="747.2" y="205.3" width="4.1" height="2.6" fill="#d5c9c0" transform="rotate(-20 747.2 205.3)"/>
<rect x="747.1" y="223.5" width="6.1" height="3.4" fill="#d5c9c0" transform="rotate(-30 747.1 223.5)"/>
<rect x="746.3" y="229.2" width="3.9" height="3.3" fill="#d5c9c0" transform="rotate(30 746.3 229.2)"/>
<rect x="752.3" y="140.9" width="5.2" height="3.5" fill="#d5c9c0" transform="rotate(30 752.3 140.9)"/>
<rect x="752.5" y="158.5" width="4.6" height="3.6" fill="#d5c9c0" transform="rotate(30 752.5 158.5)"/>
<rect x="753.1" y="170.8" width="4.9" height="3.1" fill="#d5c9c0" transform="rotate(0 753.1 170.8)"/>
<rect x="754.3" y="175.1" width="5.9" height="3.6" fill="#d5c9c0" transform="rotate(-20 754.3 175.1)"/>
<rect x="754.9" y="188.8" width="6.1" height="2.7" fill="#d5c9c0" transform="rotate(-30 754.9 188.8)"/>
<rect x="754.4" y="199.2" width="4.1" height="3.8" fill="#d5c9c0" transform="rotate(0 754.4 199.2)"/>
<rect x="754.8" y="212.5" width="4.2" height="3.3" fill="#d5c9c0" transform="rotate(-20 754.8 212.5)"/>
<rect x="752.6" y="218.7" width="4.9" height="3.5" fill="#d5c9c0" transform="rotate(-20 752.6 218.7)"/>
<rect x="753.0" y="223.1" width="4.4" height="3.5" fill="#d5c9c0" transform="rotate(-30 753.0 223.1)"/>
<rect x="760.7" y="139.5" width="6.0" height="4.1" fill="#d5c9c0" transform="rotate(25 760.7 139.5)"/>
<rect x="761.0" y="146.5" width="4.8" height="4.3" fill="#d5c9c0" transform="rotate(0 761.0 146.5)"/>
<rect x="761.1" y="176.4" width="5.1" height="3.1" fill="#d5c9c0" transform="rotate(0 761.1 176.4)"/>
<rect x="760.8" y="194.8" width="4.1" height="3.2" fill="#d5c9c0" transform="rotate(-30 760.8 194.8)"/>
<rect x="761.1" y="211.1" width="5.9" height="3.2" fill="#d5c9c0" transform="rotate(0 761.1 211.1)"/>
<rect x="761.3" y="217.9" width="4.8" height="4.5" fill="#d5c9c0" transform="rotate(-30 761.3 217.9)"/>
<rect x="768.5" y="133.2" width="3.8" height="3.8" fill="#d5c9c0" transform="rotate(-20 768.5 133.2)"/>
<rect x="766.7" y="146.1" width="5.9" height="3.1" fill="#d5c9c0" transform="rotate(-30 766.7 146.1)"/>
<rect x="766.1" y="152.6" width="3.1" height="3.5" fill="#d5c9c0" transform="rotate(30 766.1 152.6)"/>
<rect x="768.9" y="157.5" width="3.3" height="2.7" fill="#d5c9c0" transform="rotate(30 768.9 157.5)"/>
<rect x="767.8" y="163.5" width="6.0" height="4.5" fill="#d5c9c0" transform="rotate(-20 767.8 163.5)"/>
<rect x="769.0" y="175.1" width="4.7" height="2.8" fill="#d5c9c0" transform="rotate(30 769.0 175.1)"/>
<rect x="767.8" y="199.2" width="3.6" height="4.0" fill="#d5c9c0" transform="rotate(0 767.8 199.2)"/>
<rect x="767.3" y="211.4" width="5.5" height="2.9" fill="#d5c9c0" transform="rotate(-20 767.3 211.4)"/>
<rect x="768.3" y="218.7" width="4.0" height="4.1" fill="#d5c9c0" transform="rotate(0 768.3 218.7)"/>
<rect x="773.6" y="139.0" width="6.0" height="3.9" fill="#d5c9c0" transform="rotate(-30 773.6 139.0)"/>
<rect x="774.1" y="145.3" width="5.2" height="4.5" fill="#d5c9c0" transform="rotate(-20 774.1 145.3)"/>
<rect x="775.2" y="152.4" width="4.5" height="2.6" fill="#d5c9c0" transform="rotate(30 775.2 152.4)"/>
<rect x="775.6" y="163.7" width="6.1" height="3.5" fill="#d5c9c0" transform="rotate(0 775.6 163.7)"/>
<rect x="775.5" y="181.3" width="3.4" height="3.6" fill="#d5c9c0" transform="rotate(-30 775.5 181.3)"/>
<rect x="774.1" y="188.3" width="6.3" height="2.9" fill="#d5c9c0" transform="rotate(-20 774.1 188.3)"/>
<rect x="775.2" y="205.8" width="5.8" height="4.2" fill="#d5c9c0" transform="rotate(25 775.2 205.8)"/>
<rect x="773.3" y="212.5" width="4.9" height="2.6" fill="#d5c9c0" transform="rotate(0 773.3 212.5)"/>
<rect x="773.1" y="218.8" width="4.9" height="2.6" fill="#d5c9c0" transform="rotate(-20 773.1 218.8)"/>
<rect x="774.7" y="223.9" width="5.7" height="4.3" fill="#d5c9c0" transform="rotate(0 774.7 223.9)"/>
<rect x="775.7" y="229.8" width="3.4" height="3.7" fill="#d5c9c0" transform="rotate(25 775.7 229.8)"/>
<rect x="781.7" y="140.8" width="5.4" height="4.3" fill="#d5c9c0" transform="rotate(0 781.7 140.8)"/>
<rect x="782.0" y="164.7" width="6.5" height="3.9" fill="#d5c9c0" transform="rotate(30 782.0 164.7)"/>
<rect x="780.4" y="176.8" width="5.1" height="2.6" fill="#d5c9c0" transform="rotate(25 780.4 176.8)"/>
<rect x="781.7" y="194.5" width="3.8" height="4.0" fill="#d5c9c0" transform="rotate(0 781.7 194.5)"/>
<rect x="782.7" y="199.4" width="3.0" height="3.4" fill="#d5c9c0" transform="rotate(30 782.7 199.4)"/>
<rect x="782.8" y="205.4" width="5.4" height="4.4" fill="#d5c9c0" transform="rotate(-30 782.8 205.4)"/>
<rect x="780.5" y="217.0" width="5.6" height="2.7" fill="#d5c9c0" transform="rotate(0 780.5 217.0)"/>
<rect x="782.4" y="223.3" width="4.8" height="2.7" fill="#d5c9c0" transform="rotate(30 782.4 223.3)"/>
<rect x="789.6" y="134.1" width="5.9" height="3.5" fill="#d5c9c0" transform="rotate(-30 789.6 134.1)"/>
<rect x="789.1" y="152.3" width="5.2" height="3.4" fill="#d5c9c0" transform="rotate(0 789.1 152.3)"/>
<rect x="787.6" y="164.0" width="5.9" height="2.9" fill="#d5c9c0" transform="rotate(25 787.6 164.0)"/>
<rect x="788.6" y="188.4" width="3.3" height="3.0" fill="#d5c9c0" transform="rotate(0 788.6 188.4)"/>
<rect x="787.8" y="193.6" width="4.0" height="3.5" fill="#d5c9c0" transform="rotate(-30 787.8 193.6)"/>
<rect x="787.2" y="211.2" width="5.4" height="3.7" fill="#d5c9c0" transform="rotate(-30 787.2 211.2)"/>
<rect x="790.0" y="218.8" width="5.0" height="2.9" fill="#d5c9c0" transform="rotate(0 790.0 218.8)"/>
<rect x="796.0" y="140.7" width="4.5" height="4.3" fill="#d5c9c0" transform="rotate(25 796.0 140.7)"/>
<rect x="794.8" y="151.3" width="5.8" height="4.2" fill="#d5c9c0" transform="rotate(0 794.8 151.3)"/>
<rect x="794.3" y="157.9" width="6.4" height="3.8" fill="#d5c9c0" transform="rotate(30 794.3 157.9)"/>
<rect x="794.7" y="187.8" width="3.1" height="3.0" fill="#d5c9c0" transform="rotate(-20 794.7 187.8)"/>
<rect x="796.3" y="200.5" width="6.1" height="4.1" fill="#d5c9c0" transform="rotate(-30 796.3 200.5)"/>
<rect x="794.1" y="206.7" width="4.5" height="3.2" fill="#d5c9c0" transform="rotate(0 794.1 206.7)"/>
<rect x="796.9" y="211.3" width="4.9" height="3.8" fill="#d5c9c0" transform="rotate(-30 796.9 211.3)"/>
<rect x="796.8" y="218.9" width="4.8" height="4.1" fill="#d5c9c0" transform="rotate(0 796.8 218.9)"/>
<rect x="796.3" y="230.8" width="5.5" height="3.4" fill="#d5c9c0" transform="rotate(0 796.3 230.8)"/>
<path d="M704,140 L722,138 L735,150 L740,172 L728,182 L712,176 L706,160 Z" fill="#d3c6bb"/>
<rect x="400" y="196" width="22" height="16" fill="#efe9e2"/>
<rect x="426" y="204" width="18" height="12" fill="#d9cfc6"/>
<polyline points="386,133 425,152 434,167 422,186 410,215" fill="none" stroke="#fbfbfb" stroke-width="3.5" stroke-linecap="round"/>
<polyline points="397,140 390,166 383,180" fill="none" stroke="#fbfbfb" stroke-width="3.5" stroke-linecap="round"/>
<polyline points="360,205 425,225" fill="none" stroke="#fbfbfb" stroke-width="3.5" stroke-linecap="round"/>
<polyline points="360,240 405,255" fill="none" stroke="#fbfbfb" stroke-width="3.5" stroke-linecap="round"/>
<polyline points="517,157 603,172" fill="none" stroke="#fbfbfb" stroke-width="3.5" stroke-linecap="round"/>
<polyline points="535,133 560,200" fill="none" stroke="#fbfbfb" stroke-width="3.5" stroke-linecap="round"/>
<polyline points="585,133 610,180" fill="none" stroke="#fbfbfb" stroke-width="3.5" stroke-linecap="round"/>
<polyline points="640,133 625,175" fill="none" stroke="#fbfbfb" stroke-width="3.5" stroke-linecap="round"/>
<polyline points="470,180 540,175" fill="none" stroke="#fbfbfb" stroke-width="3.5" stroke-linecap="round"/>
<polyline points="460,140 560,133" fill="none" stroke="#fbfbfb" stroke-width="3.5" stroke-linecap="round"/>
<polyline points="660,158 780,158" fill="none" stroke="#fbfbfb" stroke-width="3.5" stroke-linecap="round"/>
<polyline points="700,133 700,175" fill="none" stroke="#fbfbfb" stroke-width="3.5" stroke-linecap="round"/>
<polyline points="738,140 752,204" fill="none" stroke="#fbfbfb" stroke-width="3.5" stroke-linecap="round"/>
<polyline points="760,133 800,200" fill="none" stroke="#fbfbfb" stroke-width="3.5" stroke-linecap="round"/>
<polyline points="720,133 800,170" fill="none" stroke="#fbfbfb" stroke-width="3.5" stroke-linecap="round"/>
<polyline points="600,150 680,160" fill="none" stroke="#fbfbfb" stroke-width="3.5" stroke-linecap="round"/>
<polyline points="735,182 742,195 752,205 760,213" fill="none" stroke="#fbfbfb" stroke-width="5"/>
<path d="M432,133 C431,152 447,159 468,159 C490,159 503,150 503,133 Z" fill="#a9d39b"/>
<polyline points="400,133 425,146 448,158 470,163 500,160 527,150 550,133" fill="none" stroke="#c6c4c6" stroke-width="4.5"/>
<polyline points="400,133 425,146 448,158 470,163 500,160 527,150 550,133" fill="none" stroke="#e9e7e6" stroke-width="2"/>
<rect x="702" y="166" width="8" height="12" fill="#c4ecc4"/>
<rect x="363" y="195" width="8" height="6" fill="#a0dcb0"/>
<rect x="655" y="160" width="25" height="14" fill="#e9cfcf"/>
<rect x="405" y="207" width="15" height="10" fill="#f0d0d0"/>
<polygon points="497,213 517,204 550,203 545,212 524,221 518,236 505,228 498,222" fill="#d5efc5"/>
<polyline points="396,133 430,152 462,172 480,192 492,207" fill="none" stroke="#cfc28a" stroke-width="7.5" stroke-linejoin="round" stroke-linecap="round"/>
<polyline points="360,172 415,186 466,206 486,211 530,197 567,190 622,176 636,166 655,150 670,133" fill="none" stroke="#cfc28a" stroke-width="7.5" stroke-linejoin="round" stroke-linecap="round"/>
<polyline points="462,172 490,162 515,150 547,135 556,133" fill="none" stroke="#cfc28a" stroke-width="7.5" stroke-linejoin="round" stroke-linecap="round"/>
<polyline points="383,183 362,240" fill="none" stroke="#cfc28a" stroke-width="7.5" stroke-linejoin="round" stroke-linecap="round"/>
<polyline points="423,195 408,240 392,275" fill="none" stroke="#cfc28a" stroke-width="7.5" stroke-linejoin="round" stroke-linecap="round"/>
<polyline points="360,272 382,279 398,283 411,283 416,276 418,258 424,243 432,233 450,224 470,215 486,211" fill="none" stroke="#cfc28a" stroke-width="7.5" stroke-linejoin="round" stroke-linecap="round"/>
<polyline points="735,150 760,141 800,136" fill="none" stroke="#cfc28a" stroke-width="7.5" stroke-linejoin="round" stroke-linecap="round"/>
<polyline points="735,133 745,152" fill="none" stroke="#cfc28a" stroke-width="7.5" stroke-linejoin="round" stroke-linecap="round"/>
<polyline points="396,133 430,152 462,172 480,192 492,207" fill="none" stroke="#f7f8bb" stroke-width="5.5" stroke-linejoin="round" stroke-linecap="round"/>
<polyline points="360,172 415,186 466,206 486,211 530,197 567,190 622,176 636,166 655,150 670,133" fill="none" stroke="#f7f8bb" stroke-width="5.5" stroke-linejoin="round" stroke-linecap="round"/>
<polyline points="462,172 490,162 515,150 547,135 556,133" fill="none" stroke="#f7f8bb" stroke-width="5.5" stroke-linejoin="round" stroke-linecap="round"/>
<polyline points="383,183 362,240" fill="none" stroke="#f7f8bb" stroke-width="5.5" stroke-linejoin="round" stroke-linecap="round"/>
<polyline points="423,195 408,240 392,275" fill="none" stroke="#f7f8bb" stroke-width="5.5" stroke-linejoin="round" stroke-linecap="round"/>
<polyline points="360,272 382,279 398,283 411,283 416,276 418,258 424,243 432,233 450,224 470,215 486,211" fill="none" stroke="#f7f8bb" stroke-width="5.5" stroke-linejoin="round" stroke-linecap="round"/>
<polyline points="735,150 760,141 800,136" fill="none" stroke="#f7f8bb" stroke-width="5.5" stroke-linejoin="round" stroke-linecap="round"/>
<polyline points="735,133 745,152" fill="none" stroke="#f7f8bb" stroke-width="5.5" stroke-linejoin="round" stroke-linecap="round"/>
<polygon points="517,240 527,220 542,212 560,202 580,196 627,179 696,178 734,184 734,186 722,194 699,193 636,201 600,212 580,216 561,224 545,230 530,237.5 520,247" fill="#f3e3b0"/>
<polyline points="527,220 542,212 560,202 580,196 627,179 696,178 734,184" fill="none" stroke="#e8a6a6" stroke-width="1" stroke-dasharray="1.5 1.5"/>
<polygon points="360,404 360,273 380,279 397,285 412,285 418,277 419,258 425,244 433,234 451,225 471,216 486,212 500,209 507,207 500,214 489,222 472,230 471,242 460,261 454,265 458,274 456,292 460,307 482,313.5 493,311 500,296 506,277 515,265 520.6,255 520.5,247 530,238 545,231 561,225 580,217 600,213 636,202 699,194 722,195 734,187 740,196 750,204 756,211 762,213 800,233 820,240 820,404" fill="#aad3df"/>
<polygon points="472,230 489,222 498,222 505,228 518,236 520.5,247 520.6,255 515,265 506,277 500,296 493,311 482,313.5 460,307 456,292 458,274 454,265 460,261 471,242" fill="#eee9e1"/>
<polygon points="463,275 475,255 490,245 500,236 506,237 512,255 514,265 505,278 498,298 490,303 470,302 462,292" fill="#b7d9a2"/>
<rect x="474" y="236" width="9" height="7" fill="#dcd5cc" transform="rotate(-30 474 236)"/>
<rect x="468" y="245" width="6" height="12" fill="#f4f1ec" stroke="#ddd" stroke-width="0.5"/>
<rect x="506" y="236" width="10" height="20" fill="#d8cfc6"/>
<polyline points="498,232 503,245 506,265 500,290 492,307" fill="none" stroke="#c9c9cc" stroke-width="1.6"/>
<polyline points="503,246 485,260 470,282 469,297 490,307" fill="none" stroke="#c9c9cc" stroke-width="1.6"/>
<circle cx="474" cy="304" r="3.5" fill="#d8d0c6"/>
<rect x="489" y="304" width="4" height="5" fill="#77736f"/>
<polyline points="487,208 499,232" fill="none" stroke="#888" stroke-width="2"/>
<polyline points="733,216 736,218 752,213" fill="none" stroke="#999" stroke-width="2"/>
<polygon points="752,207 770,210 800,232 800,237 768,220 752,214" fill="#e4e0dc"/>
<polyline points="526,260.5 553,263.5" fill="none" stroke="#a9a9a9" stroke-width="2.5"/>
<polyline points="717,201 698,222" fill="none" stroke="#a9a9a9" stroke-width="2.5"/>
<circle cx="435" cy="211" r="4.7" fill="#c8102e" stroke="#fff" stroke-width="0.6"/>
<path d="M432.5,211 H437.5 M435,208.5 V213.5" stroke="#fff" stroke-width="1.5"/>
<circle cx="414" cy="234" r="4.7" fill="#c8102e" stroke="#fff" stroke-width="0.6"/>
<path d="M411.5,234 H416.5 M414,231.5 V236.5" stroke="#fff" stroke-width="1.5"/>
<circle cx="532" cy="141" r="4.7" fill="#c8102e" stroke="#fff" stroke-width="0.6"/>
<path d="M529.5,141 H534.5 M532,138.5 V143.5" stroke="#fff" stroke-width="1.5"/>
<circle cx="560" cy="134" r="4.7" fill="#c8102e" stroke="#fff" stroke-width="0.6"/>
<path d="M557.5,134 H562.5 M560,131.5 V136.5" stroke="#fff" stroke-width="1.5"/>
<circle cx="594" cy="143" r="4.7" fill="#c8102e" stroke="#fff" stroke-width="0.6"/>
<path d="M591.5,143 H596.5 M594,140.5 V145.5" stroke="#fff" stroke-width="1.5"/>
<circle cx="621" cy="143" r="4.7" fill="#c8102e" stroke="#fff" stroke-width="0.6"/>
<path d="M618.5,143 H623.5 M621,140.5 V145.5" stroke="#fff" stroke-width="1.5"/>
<circle cx="630" cy="133" r="4.7" fill="#c8102e" stroke="#fff" stroke-width="0.6"/>
<path d="M627.5,133 H632.5 M630,130.5 V135.5" stroke="#fff" stroke-width="1.5"/>
<circle cx="638" cy="154" r="4.7" fill="#c8102e" stroke="#fff" stroke-width="0.6"/>
<path d="M635.5,154 H640.5 M638,151.5 V156.5" stroke="#fff" stroke-width="1.5"/>
<circle cx="588" cy="178" r="4.7" fill="#c8102e" stroke="#fff" stroke-width="0.6"/>
<path d="M585.5,178 H590.5 M588,175.5 V180.5" stroke="#fff" stroke-width="1.5"/>
<circle cx="790" cy="147" r="4.7" fill="#c8102e" stroke="#fff" stroke-width="0.6"/>
<path d="M787.5,147 H792.5 M790,144.5 V149.5" stroke="#fff" stroke-width="1.5"/>
<text x="515" y="160" font-size="6" fill="#7a6f6a" transform="rotate(0 515 160)" font-family="Liberation Sans">기계공고</text>
<text x="517" y="168" font-size="6" fill="#7a6f6a" transform="rotate(0 517 168)" font-family="Liberation Sans">삼거리</text>
<text x="545" y="167" font-size="6" fill="#7a6f6a" transform="rotate(8 545 167)" font-family="Liberation Sans">해오대로570번길</text>
<text x="540" y="176" font-size="6" fill="#7a6f6a" transform="rotate(8 540 176)" font-family="Liberation Sans">해오대해변로209번나길</text>
<text x="500" y="184" font-size="6" fill="#7a6f6a" transform="rotate(8 500 184)" font-family="Liberation Sans">해오대해변로209번가길</text>
<text x="535" y="208" font-size="6" fill="#7a6f6a" transform="rotate(-10 535 208)" font-family="Liberation Sans">해오대해변로</text>
<text x="388" y="186" font-size="6" fill="#7a6f6a" transform="rotate(14 388 186)" font-family="Liberation Sans">해오대해변로</text>
<text x="600" y="212" font-size="6" fill="#7a6f6a" transform="rotate(-10 600 212)" font-family="Liberation Sans">우1동</text>
<text x="560" y="218" font-size="6" fill="#7a6f6a" transform="rotate(0 560 218)" font-family="Liberation Sans">해오대 해</text>
<text x="563" y="226" font-size="6" fill="#7a6f6a" transform="rotate(0 563 226)" font-family="Liberation Sans">수욕장</text>
<text x="401" y="157" font-size="6" fill="#7a6f6a" transform="rotate(0 401 157)" font-family="Liberation Sans">대우마리</text>
<text x="404" y="165" font-size="6" fill="#7a6f6a" transform="rotate(0 404 165)" font-family="Liberation Sans">나1화아</text>
<text x="407" y="173" font-size="6" fill="#7a6f6a" transform="rotate(0 407 173)" font-family="Liberation Sans">파트</text>
<text x="718" y="158" font-size="6" fill="#7a6f6a" transform="rotate(0 718 158)" font-family="Liberation Sans">해오대 엠</text>
<text x="722" y="166" font-size="6" fill="#7a6f6a" transform="rotate(0 722 166)" font-family="Liberation Sans">시티</text>
<text x="640" y="138" font-size="6" fill="#7a6f6a" transform="rotate(0 640 138)" font-family="Liberation Sans">달맞이길</text>
<rect x="463" y="165" width="10" height="9" fill="#fdfdfd" stroke="#999" stroke-width="0.6" rx="1"/>
<text x="464.5" y="172" font-size="6" fill="#333" font-family="Liberation Sans">31</text>
<line x1="742" y1="195" x2="655" y2="404" stroke="#7a9cf0" stroke-width="1" stroke-dasharray="4 3"/>
<text x="740" y="203" font-size="8" fill="#4a6ad0">⚓</text>
<circle cx="565" cy="263" r="4.4" fill="#f0a318"/>
<circle cx="528" cy="252" r="4.4" fill="#f0a318"/>
<circle cx="636" cy="201.5" r="4.4" fill="#f0a318"/>
<circle cx="700" cy="195" r="4.4" fill="#f0a318"/>
<circle cx="720" cy="195.5" r="4.4" fill="#f0a318"/>
<circle cx="693" cy="218.4" r="4.4" fill="#f0a318"/>
<polyline points="507,313 565,263 528,252 636,201.5 700,195 720,195.5 693,218.4 507,313" fill="none" stroke="#5e6474" stroke-width="3.2" stroke-linejoin="round"/>
<circle cx="506.8" cy="313.2" r="8.2" fill="#ee3d3d"/>
<text x="506.8" y="317.3" font-size="10.5" text-anchor="middle">🚢</text>
</svg>
<div style="position:absolute;left:7px;top:6px;width:19px;height:37px;background:#fff;border:1px solid #c9c9c9;border-radius:3px"></div>
<div style="position:absolute;left:8px;top:24px;width:17px;height:1px;background:#ddd"></div>
<div style="position:absolute;left:8px;top:7px;width:17px;height:17px;font:bold 14px/17px 'Liberation Sans',sans-serif;text-align:center;color:#111">+</div>
<div style="position:absolute;left:8px;top:25px;width:17px;height:17px;font:bold 14px/17px 'Liberation Sans',sans-serif;text-align:center;color:#111">−</div>
<div style="position:absolute;left:373px;top:260.5px;width:100px;height:10.5px;background:rgba(255,255,255,.8);font:8px/10.5px 'Liberation Sans',sans-serif;color:#333;padding-left:3px;white-space:nowrap"><span style="display:inline-block;width:9px;height:6px;background:linear-gradient(#3060c0 50%,#f5d000 50%);vertical-align:-0.5px"></span> <span style="color:#2a74c8">Leaflet</span> | © OpenStreetMap</div>

</div><!--/map-->
<div class="a" style="left:360.7px;top:412.2px;width:94.50px;height:20.10px;background:#fff;border:1px solid #e4e7ea;border-radius:5px"></div>
<div class="t n" style="left:365.80px;top:418.60px;font-size:8px;font-weight:normal;color:#7d7d7d;transform:scaleX(0.9274);transform-origin:0 50%;">목적지 위도</div>
<div class="a" style="left:463px;top:412.2px;width:95.20px;height:20.10px;background:#fff;border:1px solid #e4e7ea;border-radius:5px"></div>
<div class="t n" style="left:468.20px;top:417.60px;font-size:8px;font-weight:normal;color:#7d7d7d;transform:scaleX(0.9274);transform-origin:0 50%;">목적지 경도</div>
<div class="a" style="left:564.7px;top:409.9px;width:58.70px;height:24.30px;background:#007bff;border-radius:4px"></div>
<div class="t b" style="left:572.80px;top:418.00px;font-size:9px;font-weight:bold;color:#fff;transform:scaleX(0.8695);transform-origin:0 50%;">경유지 추가</div>
<div class="a" style="left:630px;top:409.9px;width:66.30px;height:24.30px;background:#007bff;border-radius:4px"></div>
<div class="t b" style="left:638.10px;top:418.00px;font-size:9px;font-weight:bold;color:#fff;transform:scaleX(0.8830);transform-origin:0 50%;">경유지 초기화</div>
<div class="t n" style="left:702.80px;top:418.00px;font-size:8px;font-weight:normal;color:#6c757d;transform:scaleX(0.9261);transform-origin:0 50%;">지도 클릭 시 좌표 자동 입력</div>
<div class="a" style="left:352px;top:451.5px;width:478.00px;height:248.50px;background:#f8f9fa;border:1px solid #e7e9ec;border-radius:6px"></div>
<div class="t" style="left:359.36px;top:462.40px;font-size:11.2px">🚢</div>
<div class="t b" style="left:376.30px;top:462.50px;font-size:11px;font-weight:bold;color:#333;transform:scaleX(0.9237);transform-origin:0 50%;">자율주행 제어</div>
<div class="t b" style="left:360.20px;top:483.70px;font-size:9px;font-weight:bold;color:#444;transform:scaleX(0.8711);transform-origin:0 50%;">출발지 위도</div>
<div class="t b" style="left:462.00px;top:483.40px;font-size:9px;font-weight:bold;color:#444;transform:scaleX(0.8940);transform-origin:0 50%;">출발지 경도</div>
<div class="a" style="left:360.7px;top:496.7px;width:94.50px;height:20.10px;background:#fff;border:1px solid #e4e7ea;border-radius:5px"></div>
<div class="t n" style="left:365.70px;top:502.00px;font-size:9px;font-weight:normal;color:#222;transform:scaleX(0.9539);transform-origin:0 50%;">35.151775</div>
<div class="a" style="left:462.5px;top:496.3px;width:95.60px;height:21.00px;background:#fff;border:1px solid #e4e7ea;border-radius:5px"></div>
<div class="t n" style="left:468.50px;top:502.50px;font-size:9px;font-weight:normal;color:#222;transform:scaleX(0.9544);transform-origin:0 50%;">129.153686</div>
<div class="a" style="left:360.2px;top:523.7px;width:58.50px;height:24.60px;background:#007bff;border-radius:4px"></div>
<div class="t b" style="left:368.50px;top:531.50px;font-size:9px;font-weight:bold;color:#fff;transform:scaleX(0.8750);transform-origin:0 50%;">출발지 설정</div>
<div class="t" style="left:425.64px;top:531.95px;font-size:7.5px">💡</div>
<div class="t n" style="left:436.80px;top:531.90px;font-size:8px;font-weight:normal;color:#6c757d;transform:scaleX(0.9261);transform-origin:0 50%;">지도 더블클릭으로도 출발지 설정 가능</div>
<div class="a" style="left:623.7px;top:481px;width:50.10px;height:21.70px;background:#007bff;border-radius:4px"></div>
<div class="t b" style="left:631.70px;top:488.40px;font-size:9px;font-weight:bold;color:#fff;transform:scaleX(0.9003);transform-origin:0 50%;">경로 생성</div>
<div class="a" style="left:679.2px;top:481px;width:59.30px;height:21.70px;background:#007bff;border-radius:4px"></div>
<div class="t b" style="left:687.70px;top:488.40px;font-size:9px;font-weight:bold;color:#fff;transform:scaleX(0.8936);transform-origin:0 50%;">경유지 설정</div>
<div class="a" style="left:623.7px;top:512.5px;width:206.30px;height:25.50px;border-left:3px solid #007bff;border-radius:4px 0 0 4px"></div>
<div class="a" style="left:631.2px;top:520px;width:10.80px;height:10.80px;background:#007bff;border-radius:2px"></div>
<svg class="a" style="left:631.2px;top:520px" width="11" height="11" viewBox="0 0 11 11"><path d="M2.5,5.6 L4.6,7.8 L8.6,3.2" fill="none" stroke="#fff" stroke-width="1.6" stroke-linecap="round" stroke-linejoin="round"/></svg>
<div class="t" style="left:647.59px;top:520.95px;font-size:9.5px">🔄</div>
<div class="t b" style="left:663.00px;top:521.40px;font-size:9px;font-weight:bold;color:#333;">왕복 모드 (출발지로 자동 복귀)</div>
<div class="a" style="left:623.7px;top:544.7px;width:99.50px;height:21.80px;background:#007bff;border-radius:4px"></div>
<div class="t" style="left:631.56px;top:551.75px;font-size:8.5px">🚀</div>
<div class="t b" style="left:645.10px;top:552.30px;font-size:9px;font-weight:bold;color:#fff;transform:scaleX(0.8887);transform-origin:0 50%;">V2.0 자율주행 시작</div>
<div class="a" style="left:728.3px;top:544.7px;width:101.70px;height:21.80px;background:#dc3545;border-radius:4px"></div>
<div class="t" style="left:736.36px;top:551.75px;font-size:8.5px">🔴</div>
<div class="t b" style="left:750.00px;top:552.30px;font-size:9px;font-weight:bold;color:#fff;">자율주행 중지</div>
<div class="a" style="left:623.7px;top:573.2px;width:206.30px;height:126.80px;border-left:3px solid #007bff;border-radius:4px 0 0 4px"></div>
<div class="a" style="left:631px;top:596.5px;width:199.00px;height:1.00px;background:#eaecef"></div>
<div class="t b" style="left:631.50px;top:583.90px;font-size:9px;font-weight:bold;color:#3a3a3a;transform:scaleX(0.8836);transform-origin:0 50%;">자율주행 모드:</div>
<div class="t b" style="left:631.50px;top:605.40px;font-size:9px;font-weight:bold;color:#3a3a3a;transform:scaleX(0.8810);transform-origin:0 50%;">경유지 수:</div>
</div></div>
</body></html>
